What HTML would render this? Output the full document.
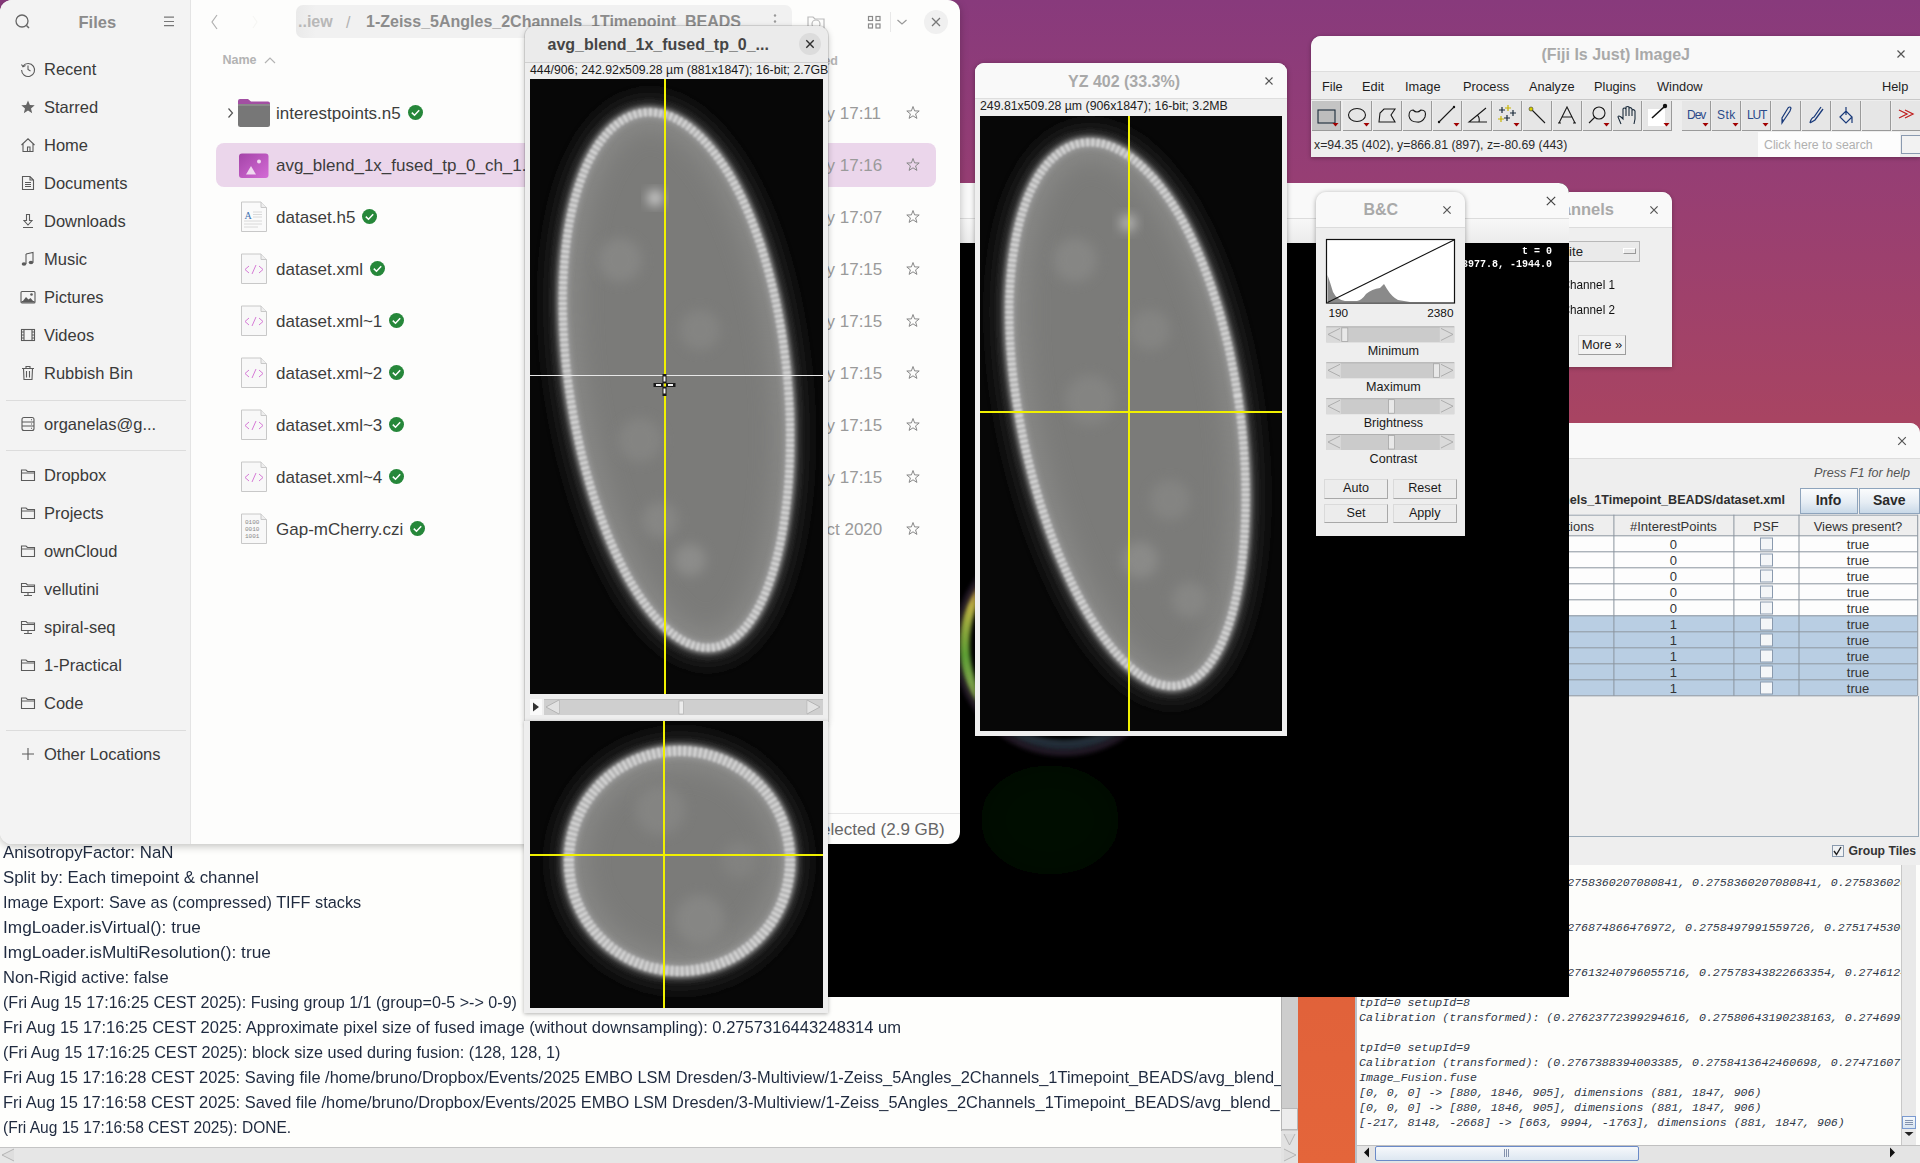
<!DOCTYPE html>
<html><head><meta charset="utf-8">
<style>
*{box-sizing:border-box;margin:0;padding:0}
html,body{width:1920px;height:1163px;overflow:hidden;font-family:"Liberation Sans",sans-serif}
body{position:relative;background:linear-gradient(180deg,#883a7c 0%,#963e74 15%,#a84462 36%,#c24e4a 60%,#e0613a 82%,#e4653a 100%)}
.a{position:absolute}
.t{position:absolute;white-space:nowrap;line-height:1}
svg{position:absolute;overflow:visible}
</style></head><body>

<div class="a" style="left:0;top:800px;width:960px;height:50px;background:#fefefc"></div>
<div class="a" id="log" style="left:0;top:844px;width:1298px;height:319px;background:#fefefc;overflow:hidden">
<div class="a" style="left:0;top:0;width:1281px;height:303px;overflow:hidden">
<div class="t" style="left:2.5px;top:-0.2px;font-size:16.25px;color:#1f2a3f;transform:scaleX(1.037);transform-origin:0 0">AnisotropyFactor: NaN</div>
<div class="t" style="left:2.5px;top:24.8px;font-size:16.25px;color:#1f2a3f;transform:scaleX(1.037);transform-origin:0 0">Split by: Each timepoint &amp; channel</div>
<div class="t" style="left:2.5px;top:49.8px;font-size:16.25px;color:#1f2a3f;transform:scaleX(1.0025);transform-origin:0 0">Image Export: Save as (compressed) TIFF stacks</div>
<div class="t" style="left:2.5px;top:74.8px;font-size:16.25px;color:#1f2a3f;transform:scaleX(1.06);transform-origin:0 0">ImgLoader.isVirtual(): true</div>
<div class="t" style="left:2.5px;top:99.8px;font-size:16.25px;color:#1f2a3f;transform:scaleX(1.063);transform-origin:0 0">ImgLoader.isMultiResolution(): true</div>
<div class="t" style="left:2.5px;top:124.8px;font-size:16.25px;color:#1f2a3f;transform:scaleX(1.02);transform-origin:0 0">Non-Rigid active: false</div>
<div class="t" style="left:2.5px;top:149.8px;font-size:16.25px;color:#1f2a3f;transform:scaleX(0.991);transform-origin:0 0">(Fri Aug 15 17:16:25 CEST 2025): Fusing group 1/1 (group=0-5 &gt;-&gt; 0-9)</div>
<div class="t" style="left:2.5px;top:174.8px;font-size:16.25px;color:#1f2a3f;transform:scaleX(1.019);transform-origin:0 0">Fri Aug 15 17:16:25 CEST 2025: Approximate pixel size of fused image (without downsampling): 0.2757316443248314 um</div>
<div class="t" style="left:2.5px;top:199.8px;font-size:16.25px;color:#1f2a3f;transform:scaleX(0.996);transform-origin:0 0">(Fri Aug 15 17:16:25 CEST 2025): block size used during fusion: (128, 128, 1)</div>
<div class="t" style="left:2.5px;top:224.8px;font-size:16.25px;color:#1f2a3f;transform:scaleX(1.011);transform-origin:0 0">Fri Aug 15 17:16:28 CEST 2025: Saving file /home/bruno/Dropbox/Events/2025 EMBO LSM Dresden/3-Multiview/1-Zeiss_5Angles_2Channels_1Timepoint_BEADS/avg_blend_1x_fused_tp_0_ch_1.tif</div>
<div class="t" style="left:2.5px;top:249.8px;font-size:16.25px;color:#1f2a3f;transform:scaleX(1.011);transform-origin:0 0">Fri Aug 15 17:16:58 CEST 2025: Saved file /home/bruno/Dropbox/Events/2025 EMBO LSM Dresden/3-Multiview/1-Zeiss_5Angles_2Channels_1Timepoint_BEADS/avg_blend_1x_fused_tp_0_ch_1.tif</div>
<div class="t" style="left:2.5px;top:274.8px;font-size:16.25px;color:#1f2a3f;transform:scaleX(0.956);transform-origin:0 0">(Fri Aug 15 17:16:58 CEST 2025): DONE.</div>
</div>
<div class="a" style="left:1281px;top:0;width:17px;height:303px;background:#cdcdcd;border-left:1px solid #b0b0b0"></div>
<div class="a" style="left:1281px;top:264px;width:17px;height:22px;background:#ececec;border:1px solid #b8b8b8"></div>
<div class="a" style="left:1281px;top:287px;width:17px;height:16px;background:#e2e2e2"></div>
<svg style="left:0;top:0" width="1298" height="319"><path d="M1284 290 L1289.5 301 L1295 290" fill="#dcdcdc" stroke="#a8a8a8" stroke-width="0.8"/><path d="M1284 306 L1295 311 L1284 316" fill="#dcdcdc" stroke="#a8a8a8" stroke-width="0.8"/></svg>
<div class="a" style="left:0;top:303px;width:1281px;height:16px;background:#e6e6e6;border-top:1px solid #c4c4c4"></div>
<svg style="left:0;top:0" width="1298" height="319"><path d="M14 305 L2 311 L14 317" fill="#dedede" stroke="#a8a8a8" stroke-width="0.8"/></svg>
<div class="a" style="left:1281px;top:303px;width:17px;height:16px;background:#e2e2e2"></div>
<svg style="left:0;top:0" width="1298" height="319"><path d="M1284 305 L1296 311 L1284 317" fill="#dcdcdc" stroke="#a8a8a8" stroke-width="0.8"/></svg>
</div>
<div class="a" style="left:1355px;top:863px;width:565px;height:300px;background:#fdfdfb;border-left:2px solid #b8c0c8;border-top:1px solid #9aaab8;overflow:hidden">
<div class="a" style="left:0;top:0;width:544px;height:281px;overflow:hidden">
<div class="t" style="left:2px;top:12.6px;font-family:'Liberation Mono';font-style:italic;font-size:11.57px;color:#2e3646">Calibration (transformed): (0.2758360207080841, 0.2758360207080841, 0.2758360207080841)</div>
<div class="t" style="left:2px;top:57.6px;font-family:'Liberation Mono';font-style:italic;font-size:11.57px;color:#2e3646">Calibration (transformed): (0.276874866476972, 0.2758497991559726, 0.2751745306)</div>
<div class="t" style="left:2px;top:102.6px;font-family:'Liberation Mono';font-style:italic;font-size:11.57px;color:#2e3646">Calibration (transformed): (0.27613240796055716, 0.27578343822663354, 0.27461240)</div>
<div class="t" style="left:2px;top:132.6px;font-family:'Liberation Mono';font-style:italic;font-size:11.57px;color:#2e3646">tpId=0 setupId=8</div>
<div class="t" style="left:2px;top:147.6px;font-family:'Liberation Mono';font-style:italic;font-size:11.57px;color:#2e3646">Calibration (transformed): (0.27623772399294616, 0.27580643190238163, 0.2746990)</div>
<div class="t" style="left:2px;top:177.8px;font-family:'Liberation Mono';font-style:italic;font-size:11.57px;color:#2e3646">tpId=0 setupId=9</div>
<div class="t" style="left:2px;top:192.6px;font-family:'Liberation Mono';font-style:italic;font-size:11.57px;color:#2e3646">Calibration (transformed): (0.2767388394003385, 0.2758413642460698, 0.27471607)</div>
<div class="t" style="left:2px;top:207.6px;font-family:'Liberation Mono';font-style:italic;font-size:11.57px;color:#2e3646">Image_Fusion.fuse</div>
<div class="t" style="left:2px;top:222.7px;font-family:'Liberation Mono';font-style:italic;font-size:11.57px;color:#2e3646">[0, 0, 0] -&gt; [880, 1846, 905], dimensions (881, 1847, 906)</div>
<div class="t" style="left:2px;top:237.7px;font-family:'Liberation Mono';font-style:italic;font-size:11.57px;color:#2e3646">[0, 0, 0] -&gt; [880, 1846, 905], dimensions (881, 1847, 906)</div>
<div class="t" style="left:2px;top:252.9px;font-family:'Liberation Mono';font-style:italic;font-size:11.57px;color:#2e3646">[-217, 8148, -2668] -&gt; [663, 9994, -1763], dimensions (881, 1847, 906)</div>
</div>
<div class="a" style="left:544px;top:0;width:15px;height:281px;background:#e9e9e9;border-left:1px solid #c8c8c8"></div>
<div class="a" style="left:545px;top:252px;width:14px;height:13px;background:linear-gradient(180deg,#f4f8fc,#d8e4f0);border:1px solid #7a9ad0"></div>
<svg style="left:0;top:0" width="565" height="300"><path d="M548 256.5 H556 M548 258.5 H556 M548 260.5 H556" stroke="#6a7a9a" stroke-width="0.8"/><path d="M547.5 268 L552 272 L556.5 268 Z" fill="#222"/><path d="M533 283.5 L537 288 L533 292.5 Z" fill="#111"/><path d="M12 283.5 L8 288 L12 292.5 Z" fill="#111"/></svg>
<div class="a" style="left:0;top:281px;width:563px;height:19px;background:#e4e4e4;border-top:1px solid #c0c0c0"></div>
<div class="a" style="left:18px;top:282px;width:264px;height:15px;background:linear-gradient(180deg,#f6f8fb,#dde7f1);border:1px solid #6a8ac8;border-radius:2px"></div>
<svg style="left:0;top:0" width="565" height="300"><path d="M12 283.5 L7 288.5 L12 293.5 Z" fill="#111"/><path d="M533 283.5 L538 288.5 L533 293.5 Z" fill="#111"/><path d="M147.5 285 V293 M149.5 285 V293 M151.5 285 V293" stroke="#6a7a9a" stroke-width="0.8"/></svg>
</div>
<div class="a" style="left:1540px;top:192px;width:132px;height:175px;background:#efefef;border-radius:0 10px 0 0;overflow:hidden;box-shadow:0 1px 4px rgba(0,0,0,0.3)">
<div class="a" style="left:0;top:0;width:132px;height:36px;background:#f9f9f9;border-bottom:1px solid #dcdcdc"></div>
</div>
<div class="t" style="left:1314px;width:300px;text-align:right;top:201.0px;font-size:16.5px;color:#a9a9a9;font-weight:bold;">Channels</div>
<svg style="left:0;top:0" width="1920" height="1163"><path d="M1650.4 206.4 L1657.6 213.6 M1657.6 206.4 L1650.4 213.6" stroke="#555" stroke-width="1.2"/></svg>
<div class="a" style="left:1540px;top:241px;width:100px;height:21px;background:#eaeaea;border:1px solid #b8b8b8;border-left:none"></div>
<div class="t" style="left:1283px;width:300px;text-align:right;top:244.8px;font-size:13.2px;color:#222;font-weight:normal;">Composite</div>
<div class="a" style="left:1623px;top:248px;width:13px;height:6px;border:1px solid #999;border-top-color:#fff;border-left-color:#fff"></div>
<div class="t" style="left:1314.5px;width:300px;text-align:right;top:277.7px;font-size:13px;color:#111;font-weight:normal;transform:scaleX(0.9);transform-origin:100% 0">Channel 1</div>
<div class="t" style="left:1314.5px;width:300px;text-align:right;top:302.8px;font-size:13px;color:#111;font-weight:normal;transform:scaleX(0.9);transform-origin:100% 0">Channel 2</div>
<div class="a" style="left:1578px;top:335px;width:48px;height:20px;background:#f2f2f2;border:1px solid #9c9c9c;border-top-color:#d8d8d8;border-left-color:#d8d8d8"></div>
<div class="t" style="left:1572.0px;width:60px;text-align:center;top:338.0px;font-size:13px;color:#222;font-weight:normal">More »</div>
<div class="a" style="left:1500px;top:423px;width:420px;height:442px;background:#eeeeee;border-radius:0 10px 0 0;overflow:hidden">
<div class="a" style="left:0;top:0;width:420px;height:36px;background:#f9f9f9;border-bottom:1px solid #dcdcdc"></div>
</div>
<svg style="left:0;top:0" width="1920" height="1163"><path d="M1898.2 437.2 L1905.8 444.8 M1905.8 437.2 L1898.2 444.8" stroke="#555" stroke-width="1.2"/></svg>
<div class="t" style="left:1610px;width:300px;text-align:right;top:467.3px;font-size:12.6px;color:#555;font-weight:normal;font-style:italic">Press F1 for help</div>
<div class="t" style="left:885px;width:900px;text-align:right;top:493.8px;font-size:12.6px;color:#2e2e2e;font-weight:bold;">/home/bruno/Dropbox/Events/2025 EMBO LSM Dresden/3-Multiview/1-Zeiss_5Angles_2Channels_1Timepoint_BEADS/dataset.xml</div>
<div class="a" style="left:1799.5px;top:487.5px;width:58px;height:26px;background:linear-gradient(180deg,#fbfcfd 0%,#e6edf4 55%,#c9d9e8 100%);border:1px solid #8ea4bc"></div>
<div class="t" style="left:1799.5px;width:58px;text-align:center;top:493.2px;font-size:14px;color:#2a2a2a;font-weight:bold">Info</div>
<div class="a" style="left:1858.5px;top:487.5px;width:61.5px;height:26px;background:linear-gradient(180deg,#fbfcfd 0%,#e6edf4 55%,#c9d9e8 100%);border:1px solid #8ea4bc"></div>
<div class="t" style="left:1858.5px;width:61.5px;text-align:center;top:493.2px;font-size:14px;color:#2a2a2a;font-weight:bold">Save</div>
<svg style="left:0;top:0" width="1920" height="1163"><rect x="1500" y="514.7" width="417.5" height="20.6" fill="#eeeeee"/><rect x="1500" y="535.5" width="417.5" height="16" fill="#fdfdfd"/><rect x="1500" y="551.5" width="417.5" height="16" fill="#fdfdfd"/><rect x="1500" y="567.5" width="417.5" height="16" fill="#fdfdfd"/><rect x="1500" y="583.5" width="417.5" height="16" fill="#fdfdfd"/><rect x="1500" y="599.5" width="417.5" height="16" fill="#fdfdfd"/><rect x="1500" y="615.5" width="417.5" height="16" fill="#b9cee3"/><rect x="1500" y="631.5" width="417.5" height="16" fill="#b9cee3"/><rect x="1500" y="647.5" width="417.5" height="16" fill="#b9cee3"/><rect x="1500" y="663.5" width="417.5" height="16" fill="#b9cee3"/><rect x="1500" y="679.5" width="417.5" height="16" fill="#b9cee3"/><rect x="1500" y="535.3" width="417.5" height="1" fill="#8a949e"/><rect x="1500" y="551.3" width="417.5" height="1" fill="#8a949e"/><rect x="1500" y="567.3" width="417.5" height="1" fill="#8a949e"/><rect x="1500" y="583.3" width="417.5" height="1" fill="#8a949e"/><rect x="1500" y="599.3" width="417.5" height="1" fill="#8a949e"/><rect x="1500" y="615.3" width="417.5" height="1" fill="#8a949e"/><rect x="1500" y="631.3" width="417.5" height="1" fill="#8a949e"/><rect x="1500" y="647.3" width="417.5" height="1" fill="#8a949e"/><rect x="1500" y="663.3" width="417.5" height="1" fill="#8a949e"/><rect x="1500" y="679.3" width="417.5" height="1" fill="#8a949e"/><rect x="1500" y="695.3" width="417.5" height="1" fill="#8a949e"/><rect x="1500" y="514.7" width="417.5" height="1" fill="#9aa4ae"/><rect x="1613.4" y="514.7" width="1" height="181" fill="#8a949e"/><rect x="1733.4" y="514.7" width="1" height="181" fill="#8a949e"/><rect x="1798.5" y="514.7" width="1" height="181" fill="#8a949e"/><rect x="1917.2" y="514.7" width="1" height="181" fill="#8a949e"/><rect x="1760.5" y="538.0" width="12" height="12" fill="#f4f6f8" stroke="#8a9aae" stroke-width="1"/><rect x="1760.5" y="554.0" width="12" height="12" fill="#f4f6f8" stroke="#8a9aae" stroke-width="1"/><rect x="1760.5" y="570.0" width="12" height="12" fill="#f4f6f8" stroke="#8a9aae" stroke-width="1"/><rect x="1760.5" y="586.0" width="12" height="12" fill="#f4f6f8" stroke="#8a9aae" stroke-width="1"/><rect x="1760.5" y="602.0" width="12" height="12" fill="#f4f6f8" stroke="#8a9aae" stroke-width="1"/><rect x="1760.5" y="618.0" width="12" height="12" fill="#f4f6f8" stroke="#8a9aae" stroke-width="1"/><rect x="1760.5" y="634.0" width="12" height="12" fill="#f4f6f8" stroke="#8a9aae" stroke-width="1"/><rect x="1760.5" y="650.0" width="12" height="12" fill="#f4f6f8" stroke="#8a9aae" stroke-width="1"/><rect x="1760.5" y="666.0" width="12" height="12" fill="#f4f6f8" stroke="#8a9aae" stroke-width="1"/><rect x="1760.5" y="682.0" width="12" height="12" fill="#f4f6f8" stroke="#8a9aae" stroke-width="1"/></svg>
<div class="t" style="left:1466.0px;width:180px;text-align:center;top:519.5px;font-size:13px;color:#333;font-weight:normal">Registrations</div>
<div class="t" style="left:1613.4px;width:120px;text-align:center;top:519.5px;font-size:13px;color:#333;font-weight:normal">#InterestPoints</div>
<div class="t" style="left:1736.0px;width:60px;text-align:center;top:519.5px;font-size:13px;color:#333;font-weight:normal">PSF</div>
<div class="t" style="left:1799.0px;width:118px;text-align:center;top:519.5px;font-size:13px;color:#333;font-weight:normal">Views present?</div>
<div class="t" style="left:1653.4px;width:40px;text-align:center;top:537.6px;font-size:13px;color:#333;font-weight:normal">0</div>
<div class="t" style="left:1828.0px;width:60px;text-align:center;top:537.6px;font-size:13px;color:#333;font-weight:normal">true</div>
<div class="t" style="left:1653.4px;width:40px;text-align:center;top:553.6px;font-size:13px;color:#333;font-weight:normal">0</div>
<div class="t" style="left:1828.0px;width:60px;text-align:center;top:553.6px;font-size:13px;color:#333;font-weight:normal">true</div>
<div class="t" style="left:1653.4px;width:40px;text-align:center;top:569.6px;font-size:13px;color:#333;font-weight:normal">0</div>
<div class="t" style="left:1828.0px;width:60px;text-align:center;top:569.6px;font-size:13px;color:#333;font-weight:normal">true</div>
<div class="t" style="left:1653.4px;width:40px;text-align:center;top:585.6px;font-size:13px;color:#333;font-weight:normal">0</div>
<div class="t" style="left:1828.0px;width:60px;text-align:center;top:585.6px;font-size:13px;color:#333;font-weight:normal">true</div>
<div class="t" style="left:1653.4px;width:40px;text-align:center;top:601.6px;font-size:13px;color:#333;font-weight:normal">0</div>
<div class="t" style="left:1828.0px;width:60px;text-align:center;top:601.6px;font-size:13px;color:#333;font-weight:normal">true</div>
<div class="t" style="left:1653.4px;width:40px;text-align:center;top:617.6px;font-size:13px;color:#333;font-weight:normal">1</div>
<div class="t" style="left:1828.0px;width:60px;text-align:center;top:617.6px;font-size:13px;color:#333;font-weight:normal">true</div>
<div class="t" style="left:1653.4px;width:40px;text-align:center;top:633.6px;font-size:13px;color:#333;font-weight:normal">1</div>
<div class="t" style="left:1828.0px;width:60px;text-align:center;top:633.6px;font-size:13px;color:#333;font-weight:normal">true</div>
<div class="t" style="left:1653.4px;width:40px;text-align:center;top:649.6px;font-size:13px;color:#333;font-weight:normal">1</div>
<div class="t" style="left:1828.0px;width:60px;text-align:center;top:649.6px;font-size:13px;color:#333;font-weight:normal">true</div>
<div class="t" style="left:1653.4px;width:40px;text-align:center;top:665.6px;font-size:13px;color:#333;font-weight:normal">1</div>
<div class="t" style="left:1828.0px;width:60px;text-align:center;top:665.6px;font-size:13px;color:#333;font-weight:normal">true</div>
<div class="t" style="left:1653.4px;width:40px;text-align:center;top:681.6px;font-size:13px;color:#333;font-weight:normal">1</div>
<div class="t" style="left:1828.0px;width:60px;text-align:center;top:681.6px;font-size:13px;color:#333;font-weight:normal">true</div>
<div class="a" style="left:1500px;top:835.5px;width:419px;height:1px;background:#9aaab8"></div>
<div class="a" style="left:1918px;top:696px;width:1px;height:140px;background:#9aaab8"></div>
<div class="a" style="left:1831.5px;top:845px;width:12px;height:12px;background:#f0f2f4;border:1px solid #8a9aae"></div>
<svg style="left:0;top:0" width="1920" height="1163"><path d="M1834 851 L1836.5 854.5 L1841 847" fill="none" stroke="#222" stroke-width="1.4"/></svg>
<div class="t" style="left:1848.5px;top:844.7px;font-size:12.2px;color:#333;font-weight:bold;">Group Tiles</div>
<div class="a" style="left:828px;top:183px;width:741px;height:814px;background:#000;border-radius:0 10px 0 0;overflow:hidden">
<div class="a" style="left:0;top:0;width:741px;height:36px;background:#f9f9f9;border-bottom:1px solid #dcdcdc"></div>
<div class="a" style="left:0;top:36px;width:741px;height:24px;background:linear-gradient(180deg,#f7f7f7,#ebebeb)"></div>
</div>
<svg style="left:0;top:0" width="1920" height="1163"><path d="M1546.8 196.8 L1555.2 205.2 M1555.2 196.8 L1546.8 205.2" stroke="#444" stroke-width="1.2"/></svg>
<div class="t" style="left:1252px;width:300px;text-align:right;top:246.5px;font-size:10px;color:#fff;font-weight:bold;font-family:'Liberation Mono';transform:scaleY(1.15)">t = 0</div>
<div class="t" style="left:1252px;width:300px;text-align:right;top:259.5px;font-size:10px;color:#fff;font-weight:bold;font-family:'Liberation Mono';transform:scaleY(1.15)">3977.8, -1944.0</div>
<svg style="left:0;top:0" width="1920" height="1163"><defs><linearGradient id="fl" x1="0" y1="0" x2="0" y2="1"><stop offset="0" stop-color="#d04070"/><stop offset="0.3" stop-color="#e0d050"/><stop offset="0.55" stop-color="#70c040"/><stop offset="0.75" stop-color="#a0c060"/><stop offset="0.92" stop-color="#8098a8" stop-opacity="0.5"/><stop offset="1" stop-color="#6080a0" stop-opacity="0.4"/></linearGradient><filter id="flb" x="-20%" y="-20%" width="140%" height="140%"><feGaussianBlur stdDeviation="2"/></filter><filter id="flb2" x="-50%" y="-50%" width="200%" height="200%"><feGaussianBlur stdDeviation="18"/></filter></defs><ellipse cx="1050" cy="820" rx="70" ry="55" fill="#040904" filter="url(#flb2)"/><circle cx="1064" cy="645" r="100" fill="none" stroke="url(#fl)" stroke-width="11" opacity="0.85" filter="url(#flb)"/><circle cx="1064" cy="645" r="108" fill="none" stroke="#3a2a40" stroke-width="6" opacity="0.6" filter="url(#flb)"/></svg>
<div class="a" id="files" style="left:0;top:0;width:960px;height:844px;background:#fdfdfc;border-radius:12px 12px 12px 12px;overflow:hidden;box-shadow:0 2px 8px rgba(0,0,0,0.25)">
<div class="a" style="left:0;top:0;width:191px;height:844px;background:#f3f3f3;border-right:1px solid #e4e4e4"></div>
<svg style="left:0;top:0" width="191" height="40"><circle cx="22" cy="21" r="6" fill="none" stroke="#666" stroke-width="1.3"/><line x1="26.5" y1="25.5" x2="29" y2="28" stroke="#666" stroke-width="1.5"/><g stroke="#777" stroke-width="1.2"><line x1="164" y1="17.2" x2="174" y2="17.2"/><line x1="164" y1="21.5" x2="174" y2="21.5"/><line x1="164" y1="25.7" x2="174" y2="25.7"/></g></svg>
<div class="t" style="left:78.5px;top:14.0px;font-size:16.5px;color:#8b8b8b;font-weight:bold;">Files</div>
<svg style="left:20px;top:61px" width="16" height="16"><path d="M3 5 A6.5 6.5 0 1 1 1.6 9" stroke="#5a5a5a" stroke-width="1.1" fill="none"/><path d="M1.5 3.5 L3 5.8 L5.5 4.6" stroke="#5a5a5a" stroke-width="1.1" fill="none"/><path d="M8 4.5 V8.5 L10.5 10" stroke="#5a5a5a" stroke-width="1.1" fill="none"/></svg>
<div class="t" style="left:44px;top:61.0px;font-size:16.5px;color:#3a3a3a;font-weight:normal;">Recent</div>
<svg style="left:20px;top:99px" width="16" height="16"><path d="M8 1.5 L9.9 6 L14.7 6.3 L11 9.4 L12.2 14.2 L8 11.6 L3.8 14.2 L5 9.4 L1.3 6.3 L6.1 6 Z" fill="#666"/></svg>
<div class="t" style="left:44px;top:99.0px;font-size:16.5px;color:#3a3a3a;font-weight:normal;">Starred</div>
<svg style="left:20px;top:137px" width="16" height="16"><path d="M1.5 8 L8 1.8 L14.5 8 M3 6.8 V14.5 H13 V6.8 M7.5 14.5 V10 H10 V14.5" stroke="#5a5a5a" stroke-width="1.1" fill="none"/></svg>
<div class="t" style="left:44px;top:137.0px;font-size:16.5px;color:#3a3a3a;font-weight:normal;">Home</div>
<svg style="left:20px;top:175px" width="16" height="16"><path d="M2.5 1.5 H10 L13.5 5 V14.5 H2.5 Z M10 1.5 V5 H13.5" stroke="#5a5a5a" stroke-width="1.1" fill="none"/><path d="M5 7.5 H11 M5 9.5 H11 M5 11.5 H11" stroke="#5a5a5a" stroke-width="1.1" fill="none"/></svg>
<div class="t" style="left:44px;top:175.0px;font-size:16.5px;color:#3a3a3a;font-weight:normal;">Documents</div>
<svg style="left:20px;top:213px" width="16" height="16"><path d="M6.5 1.5 H9.5 V7.5 H12 L8 12 L4 7.5 H6.5 Z M3 14.5 H13" stroke="#5a5a5a" stroke-width="1.1" fill="none"/></svg>
<div class="t" style="left:44px;top:213.0px;font-size:16.5px;color:#3a3a3a;font-weight:normal;">Downloads</div>
<svg style="left:20px;top:251px" width="16" height="16"><path d="M6 3 L13 1.5 V11.5" stroke="#5a5a5a" stroke-width="1.1" fill="none" stroke-width="1.4"/><path d="M6 3 V13" stroke="#5a5a5a" stroke-width="1.1" fill="none" stroke-width="1.4"/><ellipse cx="4" cy="13" rx="2.3" ry="1.8" fill="#5a5a5a"/><ellipse cx="11" cy="11.5" rx="2.3" ry="1.8" fill="#5a5a5a"/></svg>
<div class="t" style="left:44px;top:251.0px;font-size:16.5px;color:#3a3a3a;font-weight:normal;">Music</div>
<svg style="left:20px;top:289px" width="16" height="16"><rect x="1" y="2.5" width="14" height="11.5" rx="1" stroke="#5a5a5a" stroke-width="1.1" fill="none"/><path d="M2.5 12.5 L6 8 L8.5 10.5 L10.5 9 L13.5 12.5 Z" fill="#5a5a5a"/><circle cx="11.5" cy="5.5" r="1.3" fill="#5a5a5a"/><path d="M1.5 12.8 H14.5" stroke="#5a5a5a" stroke-width="1.6"/></svg>
<div class="t" style="left:44px;top:289.0px;font-size:16.5px;color:#3a3a3a;font-weight:normal;">Pictures</div>
<svg style="left:20px;top:327px" width="16" height="16"><rect x="1.5" y="2.5" width="13" height="11" stroke="#5a5a5a" stroke-width="1.1" fill="none"/><path d="M4 2.5 V13.5 M12 2.5 V13.5 M1.5 5 H4 M1.5 8 H4 M1.5 11 H4 M12 5 H14.5 M12 8 H14.5 M12 11 H14.5" stroke="#5a5a5a" stroke-width="1.1" fill="none"/></svg>
<div class="t" style="left:44px;top:327.0px;font-size:16.5px;color:#3a3a3a;font-weight:normal;">Videos</div>
<svg style="left:20px;top:365px" width="16" height="16"><path d="M2 3.5 H14 M6 3.5 V1.5 H10 V3.5 M3.5 3.5 L4 14.5 H12 L12.5 3.5 M6.5 6 V12.5 M9.5 6 V12.5" stroke="#5a5a5a" stroke-width="1.1" fill="none"/></svg>
<div class="t" style="left:44px;top:365.0px;font-size:16.5px;color:#3a3a3a;font-weight:normal;">Rubbish Bin</div>
<svg style="left:20px;top:416px" width="16" height="16"><rect x="2" y="1.5" width="12" height="13" rx="2" stroke="#5a5a5a" stroke-width="1.1" fill="none"/><path d="M2 6 H14 M2 10 H14" stroke="#5a5a5a" stroke-width="1.1" fill="none"/><path d="M11 3.8 H12 M11 8 H12 M11 12.2 H12" stroke="#5a5a5a" stroke-width="1.1" fill="none"/></svg>
<div class="t" style="left:44px;top:416.0px;font-size:16.5px;color:#3a3a3a;font-weight:normal;">organelas@g...</div>
<svg style="left:20px;top:467px" width="16" height="16"><path d="M1.5 3 H6 L7.5 4.5 H14.5 V13.5 H1.5 Z M1.5 6 H14.5" stroke="#5a5a5a" stroke-width="1.1" fill="none"/></svg>
<div class="t" style="left:44px;top:467.0px;font-size:16.5px;color:#3a3a3a;font-weight:normal;">Dropbox</div>
<svg style="left:20px;top:505px" width="16" height="16"><path d="M1.5 3 H6 L7.5 4.5 H14.5 V13.5 H1.5 Z M1.5 6 H14.5" stroke="#5a5a5a" stroke-width="1.1" fill="none"/></svg>
<div class="t" style="left:44px;top:505.0px;font-size:16.5px;color:#3a3a3a;font-weight:normal;">Projects</div>
<svg style="left:20px;top:543px" width="16" height="16"><path d="M1.5 3 H6 L7.5 4.5 H14.5 V13.5 H1.5 Z M1.5 6 H14.5" stroke="#5a5a5a" stroke-width="1.1" fill="none"/></svg>
<div class="t" style="left:44px;top:543.0px;font-size:16.5px;color:#3a3a3a;font-weight:normal;">ownCloud</div>
<svg style="left:20px;top:581px" width="16" height="16"><path d="M1.5 2.5 H6 L7.5 4 H14.5 V11.5 H1.5 Z M1.5 5.5 H14.5 M8 11.5 V14 M4 14.5 H12" stroke="#5a5a5a" stroke-width="1.1" fill="none"/></svg>
<div class="t" style="left:44px;top:581.0px;font-size:16.5px;color:#3a3a3a;font-weight:normal;">vellutini</div>
<svg style="left:20px;top:619px" width="16" height="16"><path d="M1.5 2.5 H6 L7.5 4 H14.5 V11.5 H1.5 Z M1.5 5.5 H14.5 M8 11.5 V14 M4 14.5 H12" stroke="#5a5a5a" stroke-width="1.1" fill="none"/></svg>
<div class="t" style="left:44px;top:619.0px;font-size:16.5px;color:#3a3a3a;font-weight:normal;">spiral-seq</div>
<svg style="left:20px;top:657px" width="16" height="16"><path d="M1.5 3 H6 L7.5 4.5 H14.5 V13.5 H1.5 Z M1.5 6 H14.5" stroke="#5a5a5a" stroke-width="1.1" fill="none"/></svg>
<div class="t" style="left:44px;top:657.0px;font-size:16.5px;color:#3a3a3a;font-weight:normal;">1-Practical</div>
<svg style="left:20px;top:695px" width="16" height="16"><path d="M1.5 3 H6 L7.5 4.5 H14.5 V13.5 H1.5 Z M1.5 6 H14.5" stroke="#5a5a5a" stroke-width="1.1" fill="none"/></svg>
<div class="t" style="left:44px;top:695.0px;font-size:16.5px;color:#3a3a3a;font-weight:normal;">Code</div>
<svg style="left:20px;top:746px" width="16" height="16"><path d="M8 2 V14 M2 8 H14" stroke="#5a5a5a" stroke-width="1.1" fill="none"/></svg>
<div class="t" style="left:44px;top:746.0px;font-size:16.5px;color:#3a3a3a;font-weight:normal;">Other Locations</div>
<div class="a" style="left:6px;top:399.5px;width:180px;height:1px;background:#dcdcdc"></div>
<div class="a" style="left:6px;top:449.5px;width:180px;height:1px;background:#dcdcdc"></div>
<div class="a" style="left:6px;top:729.5px;width:180px;height:1px;background:#dcdcdc"></div>
<svg style="left:0;top:0" width="960" height="60"><path d="M217 15 L212 22 L217 29" fill="none" stroke="#b0b0b0" stroke-width="1.2"/><path d="M253 16 L257 22 L253 28" fill="none" stroke="#f6f6f4" stroke-width="1.2"/></svg>
<div class="a" style="left:296px;top:5px;width:496px;height:33px;border-radius:7px;background:linear-gradient(90deg,#eaeaea 0px,#f1f1f1 20px,#f1f1f1 100%)"></div>
<div class="t" style="left:298px;top:14.0px;font-size:16px;color:#b8b8b8;font-weight:bold;">..iew</div>
<div class="t" style="left:346px;top:14.5px;font-size:16px;color:#b0b0b0;font-weight:normal;">/</div>
<div class="t" style="left:366px;top:14.0px;font-size:16px;color:#8c8c8c;font-weight:bold;letter-spacing:0px">1-Zeiss_5Angles_2Channels_1Timepoint_BEADS</div>
<svg style="left:0;top:0" width="960" height="60"><g fill="#999"><circle cx="775" cy="15.5" r="1.2"/><circle cx="775" cy="21.5" r="1.2"/><circle cx="775" cy="27.5" r="1.2"/></g><path d="M808 30 V17 H813 L815 19 H824 V30" fill="none" stroke="#bbb" stroke-width="1.2"/><circle cx="816" cy="24" r="4" fill="none" stroke="#bbb" stroke-width="1.2"/><g fill="none" stroke="#8a8a8a" stroke-width="1.2"><rect x="868.5" y="16.5" width="4" height="4"/><rect x="876" y="16.5" width="4" height="4"/><rect x="868.5" y="24" width="4" height="4"/><rect x="876" y="24" width="4" height="4"/></g><line x1="890.5" y1="12" x2="890.5" y2="32" stroke="#e8e8e8"/><path d="M897.5 20 L902 24 L906.5 20" fill="none" stroke="#999" stroke-width="1.2"/><circle cx="936" cy="22" r="12" fill="#f0f0f0"/><path d="M932 18 L940 26 M940 18 L932 26" stroke="#777" stroke-width="1.3"/></svg>
<div class="t" style="left:222.5px;top:54.4px;font-size:12.5px;color:#b3b3b3;font-weight:bold;">Name</div>
<div class="t" style="left:638px;width:200px;text-align:right;top:55.4px;font-size:12.5px;color:#b3b3b3;font-weight:bold">Modified</div>
<svg style="left:0;top:0" width="300" height="80"><path d="M265 63 L270 58 L275 63" fill="none" stroke="#b3b3b3" stroke-width="1.2"/></svg>
<div class="a" style="left:216px;top:143px;width:720px;height:44px;border-radius:8px;background:#ebd6eb"></div>
<svg style="left:0;top:0" width="300" height="140"><path d="M228.5 108.5 L232.5 113 L228.5 117.5" fill="none" stroke="#555" stroke-width="1.2"/><path d="M238 101 Q238 99 240 99 H248 L251 101.5 H268 Q270 101.5 270 103.5 V108 H238 Z" fill="#a24fa2"/><rect x="238" y="104" width="32" height="23" rx="2.5" fill="#777"/><rect x="238" y="104" width="32" height="2" fill="#8a8a8a"/></svg>
<div class="t" style="left:276px;top:104.6px;font-size:17px;color:#3d3d3d;font-weight:normal;">interestpoints.n5</div>
<div class="t" style="left:826.5px;top:104.6px;font-size:17px;color:#9a9a9a;font-weight:normal;">y 17:11</div>
<svg style="left:0;top:0" width="960" height="560"><path transform="translate(913 113)" d="M0 -6.5 L1.6 -2.1 L6.2 -2 L2.6 0.9 L3.9 5.4 L0 2.8 L-3.9 5.4 L-2.6 0.9 L-6.2 -2 L-1.6 -2.1 Z" fill="none" stroke="#888" stroke-width="1"/></svg>
<svg style="left:0;top:0" width="300" height="200"><defs><linearGradient id="gi" x1="0" y1="0" x2="1" y2="1"><stop offset="0" stop-color="#a444a8"/><stop offset="1" stop-color="#d46cd6"/></linearGradient></defs><rect x="239" y="153.5" width="29.5" height="24.5" rx="3" fill="url(#gi)"/><path d="M246 174.5 L251 166 L256 174.5 Z" fill="#f0d8f0"/><circle cx="259" cy="161.5" r="2" fill="#f0d8f0"/></svg>
<div class="t" style="left:276px;top:156.6px;font-size:17px;color:#3d3d3d;font-weight:normal;">avg_blend_1x_fused_tp_0_ch_1.tif</div>
<div class="t" style="left:826.5px;top:156.6px;font-size:17px;color:#9a9a9a;font-weight:normal;">y 17:16</div>
<svg style="left:0;top:0" width="960" height="560"><path transform="translate(913 165)" d="M0 -6.5 L1.6 -2.1 L6.2 -2 L2.6 0.9 L3.9 5.4 L0 2.8 L-3.9 5.4 L-2.6 0.9 L-6.2 -2 L-1.6 -2.1 Z" fill="none" stroke="#888" stroke-width="1"/></svg>
<svg style="left:0;top:0" width="300" height="260"><path d="M241.5 202 H261 L266.5 207.5 V231.5 H241.5 Z" fill="#fafafa" stroke="#c8c8c8" stroke-width="1"/><path d="M261 202 V207.5 H266.5" fill="#eee" stroke="#c8c8c8"/><text x="244.5" y="218.5" font-family="Liberation Serif" font-size="10" fill="#3a70b0">A</text><path d="M253 212 H262 M253 214.5 H262 M253 217 H262 M244 221 H262 M244 224 H262 M244 227 H258" stroke="#d0d0d0" stroke-width="0.8"/></svg>
<div class="t" style="left:276px;top:208.6px;font-size:17px;color:#3d3d3d;font-weight:normal;">dataset.h5</div>
<div class="t" style="left:826.5px;top:208.6px;font-size:17px;color:#9a9a9a;font-weight:normal;">y 17:07</div>
<svg style="left:0;top:0" width="960" height="560"><path transform="translate(913 217)" d="M0 -6.5 L1.6 -2.1 L6.2 -2 L2.6 0.9 L3.9 5.4 L0 2.8 L-3.9 5.4 L-2.6 0.9 L-6.2 -2 L-1.6 -2.1 Z" fill="none" stroke="#888" stroke-width="1"/></svg>
<svg style="left:0;top:0" width="300" height="520"><path d="M241.5 254 H261 L266.5 259.5 V283.5 H241.5 Z" fill="#f8f8f8" stroke="#c8c8c8" stroke-width="1"/><path d="M261 254 V259.5 H266.5" fill="#eee" stroke="#c8c8c8"/><path d="M249 266 L245 269.5 L249 273 M252 274 L256 265 M259 266 L263 269.5 L259 273" fill="none" stroke="#d67ad6" stroke-width="1"/></svg>
<div class="t" style="left:276px;top:260.6px;font-size:17px;color:#3d3d3d;font-weight:normal;">dataset.xml</div>
<div class="t" style="left:826.5px;top:260.6px;font-size:17px;color:#9a9a9a;font-weight:normal;">y 17:15</div>
<svg style="left:0;top:0" width="960" height="560"><path transform="translate(913 269)" d="M0 -6.5 L1.6 -2.1 L6.2 -2 L2.6 0.9 L3.9 5.4 L0 2.8 L-3.9 5.4 L-2.6 0.9 L-6.2 -2 L-1.6 -2.1 Z" fill="none" stroke="#888" stroke-width="1"/></svg>
<svg style="left:0;top:0" width="300" height="520"><path d="M241.5 306 H261 L266.5 311.5 V335.5 H241.5 Z" fill="#f8f8f8" stroke="#c8c8c8" stroke-width="1"/><path d="M261 306 V311.5 H266.5" fill="#eee" stroke="#c8c8c8"/><path d="M249 318 L245 321.5 L249 325 M252 326 L256 317 M259 318 L263 321.5 L259 325" fill="none" stroke="#d67ad6" stroke-width="1"/></svg>
<div class="t" style="left:276px;top:312.6px;font-size:17px;color:#3d3d3d;font-weight:normal;">dataset.xml~1</div>
<div class="t" style="left:826.5px;top:312.6px;font-size:17px;color:#9a9a9a;font-weight:normal;">y 17:15</div>
<svg style="left:0;top:0" width="960" height="560"><path transform="translate(913 321)" d="M0 -6.5 L1.6 -2.1 L6.2 -2 L2.6 0.9 L3.9 5.4 L0 2.8 L-3.9 5.4 L-2.6 0.9 L-6.2 -2 L-1.6 -2.1 Z" fill="none" stroke="#888" stroke-width="1"/></svg>
<svg style="left:0;top:0" width="300" height="520"><path d="M241.5 358 H261 L266.5 363.5 V387.5 H241.5 Z" fill="#f8f8f8" stroke="#c8c8c8" stroke-width="1"/><path d="M261 358 V363.5 H266.5" fill="#eee" stroke="#c8c8c8"/><path d="M249 370 L245 373.5 L249 377 M252 378 L256 369 M259 370 L263 373.5 L259 377" fill="none" stroke="#d67ad6" stroke-width="1"/></svg>
<div class="t" style="left:276px;top:364.6px;font-size:17px;color:#3d3d3d;font-weight:normal;">dataset.xml~2</div>
<div class="t" style="left:826.5px;top:364.6px;font-size:17px;color:#9a9a9a;font-weight:normal;">y 17:15</div>
<svg style="left:0;top:0" width="960" height="560"><path transform="translate(913 373)" d="M0 -6.5 L1.6 -2.1 L6.2 -2 L2.6 0.9 L3.9 5.4 L0 2.8 L-3.9 5.4 L-2.6 0.9 L-6.2 -2 L-1.6 -2.1 Z" fill="none" stroke="#888" stroke-width="1"/></svg>
<svg style="left:0;top:0" width="300" height="520"><path d="M241.5 410 H261 L266.5 415.5 V439.5 H241.5 Z" fill="#f8f8f8" stroke="#c8c8c8" stroke-width="1"/><path d="M261 410 V415.5 H266.5" fill="#eee" stroke="#c8c8c8"/><path d="M249 422 L245 425.5 L249 429 M252 430 L256 421 M259 422 L263 425.5 L259 429" fill="none" stroke="#d67ad6" stroke-width="1"/></svg>
<div class="t" style="left:276px;top:416.6px;font-size:17px;color:#3d3d3d;font-weight:normal;">dataset.xml~3</div>
<div class="t" style="left:826.5px;top:416.6px;font-size:17px;color:#9a9a9a;font-weight:normal;">y 17:15</div>
<svg style="left:0;top:0" width="960" height="560"><path transform="translate(913 425)" d="M0 -6.5 L1.6 -2.1 L6.2 -2 L2.6 0.9 L3.9 5.4 L0 2.8 L-3.9 5.4 L-2.6 0.9 L-6.2 -2 L-1.6 -2.1 Z" fill="none" stroke="#888" stroke-width="1"/></svg>
<svg style="left:0;top:0" width="300" height="520"><path d="M241.5 462 H261 L266.5 467.5 V491.5 H241.5 Z" fill="#f8f8f8" stroke="#c8c8c8" stroke-width="1"/><path d="M261 462 V467.5 H266.5" fill="#eee" stroke="#c8c8c8"/><path d="M249 474 L245 477.5 L249 481 M252 482 L256 473 M259 474 L263 477.5 L259 481" fill="none" stroke="#d67ad6" stroke-width="1"/></svg>
<div class="t" style="left:276px;top:468.6px;font-size:17px;color:#3d3d3d;font-weight:normal;">dataset.xml~4</div>
<div class="t" style="left:826.5px;top:468.6px;font-size:17px;color:#9a9a9a;font-weight:normal;">y 17:15</div>
<svg style="left:0;top:0" width="960" height="560"><path transform="translate(913 477)" d="M0 -6.5 L1.6 -2.1 L6.2 -2 L2.6 0.9 L3.9 5.4 L0 2.8 L-3.9 5.4 L-2.6 0.9 L-6.2 -2 L-1.6 -2.1 Z" fill="none" stroke="#888" stroke-width="1"/></svg>
<svg style="left:0;top:0" width="300" height="560"><path d="M241.5 514 H261 L266.5 519.5 V543.5 H241.5 Z" fill="#f8f8f8" stroke="#c8c8c8" stroke-width="1"/><path d="M261 514 V519.5 H266.5" fill="#eee" stroke="#c8c8c8"/><g font-family="Liberation Mono" font-size="6" fill="#888"><text x="245" y="524">0100</text><text x="245" y="531">0010</text><text x="245" y="538">1001</text></g></svg>
<div class="t" style="left:276px;top:520.6px;font-size:17px;color:#3d3d3d;font-weight:normal;">Gap-mCherry.czi</div>
<div class="t" style="left:826.5px;top:520.6px;font-size:17px;color:#9a9a9a;font-weight:normal;">ct 2020</div>
<svg style="left:0;top:0" width="960" height="560"><path transform="translate(913 529)" d="M0 -6.5 L1.6 -2.1 L6.2 -2 L2.6 0.9 L3.9 5.4 L0 2.8 L-3.9 5.4 L-2.6 0.9 L-6.2 -2 L-1.6 -2.1 Z" fill="none" stroke="#888" stroke-width="1"/></svg>
<div class="t" style="left:276px;top:104.6px;font-size:17px;color:transparent">interestpoints.n5<span style="display:inline-block;width:15px;height:15px;border-radius:50%;background:#26873a;margin-left:7px;vertical-align:-1px;position:relative"><svg style="left:0;top:0" width="15" height="15"><path d="M3.8 7.6 L6.5 10.2 L11.2 5.2" fill="none" stroke="#fff" stroke-width="1.5"/></svg></span></div>
<div class="t" style="left:276px;top:156.6px;font-size:17px;color:transparent">avg_blend_1x_fused_tp_0_ch_1.tif<span style="display:inline-block;width:15px;height:15px;border-radius:50%;background:#26873a;margin-left:7px;vertical-align:-1px;position:relative"><svg style="left:0;top:0" width="15" height="15"><path d="M3.8 7.6 L6.5 10.2 L11.2 5.2" fill="none" stroke="#fff" stroke-width="1.5"/></svg></span></div>
<div class="t" style="left:276px;top:208.6px;font-size:17px;color:transparent">dataset.h5<span style="display:inline-block;width:15px;height:15px;border-radius:50%;background:#26873a;margin-left:7px;vertical-align:-1px;position:relative"><svg style="left:0;top:0" width="15" height="15"><path d="M3.8 7.6 L6.5 10.2 L11.2 5.2" fill="none" stroke="#fff" stroke-width="1.5"/></svg></span></div>
<div class="t" style="left:276px;top:260.6px;font-size:17px;color:transparent">dataset.xml<span style="display:inline-block;width:15px;height:15px;border-radius:50%;background:#26873a;margin-left:7px;vertical-align:-1px;position:relative"><svg style="left:0;top:0" width="15" height="15"><path d="M3.8 7.6 L6.5 10.2 L11.2 5.2" fill="none" stroke="#fff" stroke-width="1.5"/></svg></span></div>
<div class="t" style="left:276px;top:312.6px;font-size:17px;color:transparent">dataset.xml~1<span style="display:inline-block;width:15px;height:15px;border-radius:50%;background:#26873a;margin-left:7px;vertical-align:-1px;position:relative"><svg style="left:0;top:0" width="15" height="15"><path d="M3.8 7.6 L6.5 10.2 L11.2 5.2" fill="none" stroke="#fff" stroke-width="1.5"/></svg></span></div>
<div class="t" style="left:276px;top:364.6px;font-size:17px;color:transparent">dataset.xml~2<span style="display:inline-block;width:15px;height:15px;border-radius:50%;background:#26873a;margin-left:7px;vertical-align:-1px;position:relative"><svg style="left:0;top:0" width="15" height="15"><path d="M3.8 7.6 L6.5 10.2 L11.2 5.2" fill="none" stroke="#fff" stroke-width="1.5"/></svg></span></div>
<div class="t" style="left:276px;top:416.6px;font-size:17px;color:transparent">dataset.xml~3<span style="display:inline-block;width:15px;height:15px;border-radius:50%;background:#26873a;margin-left:7px;vertical-align:-1px;position:relative"><svg style="left:0;top:0" width="15" height="15"><path d="M3.8 7.6 L6.5 10.2 L11.2 5.2" fill="none" stroke="#fff" stroke-width="1.5"/></svg></span></div>
<div class="t" style="left:276px;top:468.6px;font-size:17px;color:transparent">dataset.xml~4<span style="display:inline-block;width:15px;height:15px;border-radius:50%;background:#26873a;margin-left:7px;vertical-align:-1px;position:relative"><svg style="left:0;top:0" width="15" height="15"><path d="M3.8 7.6 L6.5 10.2 L11.2 5.2" fill="none" stroke="#fff" stroke-width="1.5"/></svg></span></div>
<div class="t" style="left:276px;top:520.6px;font-size:17px;color:transparent">Gap-mCherry.czi<span style="display:inline-block;width:15px;height:15px;border-radius:50%;background:#26873a;margin-left:7px;vertical-align:-1px;position:relative"><svg style="left:0;top:0" width="15" height="15"><path d="M3.8 7.6 L6.5 10.2 L11.2 5.2" fill="none" stroke="#fff" stroke-width="1.5"/></svg></span></div>
<div class="a" style="left:600px;top:812.5px;width:360px;height:1px;background:#e6e6e6"></div>
<div class="t" style="left:821px;top:820.6px;font-size:17px;color:#666;font-weight:normal;">elected (2.9 GB)</div>
</div>
<div class="a" id="avg" style="left:525px;top:26px;width:303px;height:695px;background:#eeeeee;border-radius:10px 10px 0 0;box-shadow:0 0 0 1px rgba(0,0,0,0.10),0 2px 6px rgba(0,0,0,0.25);overflow:hidden">
<div class="a" style="left:0;top:0;width:303px;height:37px;background:#ebebeb;border-bottom:1px solid #d0d0d0"></div>
<div class="t" style="left:22.5px;top:10.5px;font-size:16px;font-weight:bold;color:#454545">avg_blend_1x_fused_tp_0_...</div>
<svg style="left:0;top:0" width="303" height="40"><circle cx="285" cy="18" r="11" fill="#dcdcdc"/><path d="M281.3 14.3 L288.7 21.7 M288.7 14.3 L281.3 21.7" stroke="#2e2e2e" stroke-width="1.4"/></svg>
<div class="t" style="left:5px;top:37.8px;font-size:12.3px;color:#1a1a1a">444/906; 242.92x509.28 µm (881x1847); 16-bit; 2.7GB</div>
<div class="a" style="left:5px;top:53px;width:293px;height:615px;overflow:hidden"><svg style="left:0;top:0" width="293" height="615" viewBox="530 79 293 615"><defs><filter id="blA" x="-50%" y="-50%" width="200%" height="200%"><feGaussianBlur stdDeviation="7"/></filter><filter id="bsA" x="-50%" y="-50%" width="200%" height="200%"><feGaussianBlur stdDeviation="0.9"/></filter><filter id="bmA" x="-50%" y="-50%" width="200%" height="200%"><feGaussianBlur stdDeviation="2.5"/></filter><filter id="bhA" x="-50%" y="-50%" width="200%" height="200%"><feGaussianBlur stdDeviation="5"/></filter><filter id="bbA" x="-50%" y="-50%" width="200%" height="200%"><feGaussianBlur stdDeviation="6"/></filter><filter id="biA" x="-50%" y="-50%" width="200%" height="200%"><feGaussianBlur stdDeviation="12"/></filter><clipPath id="ciA"><path d="M786.1 366.0 C787.0 373.8 787.6 381.6 788.2 389.4 C788.8 397.2 789.3 405.0 789.6 412.7 C789.9 420.4 790.0 428.2 790.0 435.8 C790.0 443.4 789.9 450.9 789.7 458.4 C789.5 465.8 789.1 473.3 788.6 480.5 C788.1 487.7 787.4 494.9 786.6 501.8 C785.8 508.7 784.9 515.5 783.9 522.1 C782.9 528.7 781.8 535.2 780.5 541.4 C779.2 547.6 777.8 553.6 776.3 559.4 C774.8 565.2 773.1 570.8 771.4 576.1 C769.7 581.4 767.8 586.4 765.9 591.2 C764.0 596.0 761.9 600.5 759.8 604.7 C757.7 608.9 755.4 613.0 753.1 616.6 C750.8 620.2 748.3 623.6 745.8 626.6 C743.3 629.6 740.8 632.3 738.2 634.7 C735.6 637.1 732.8 639.2 730.0 640.9 C727.2 642.6 724.4 644.0 721.5 645.1 C718.6 646.2 715.7 646.9 712.7 647.3 C709.7 647.7 706.7 647.7 703.6 647.4 C700.5 647.1 697.4 646.5 694.3 645.5 C691.2 644.5 688.0 643.2 684.9 641.6 C681.8 640.0 678.6 638.0 675.4 635.7 C672.2 633.4 669.0 630.8 665.8 627.9 C662.6 625.0 659.5 621.8 656.4 618.2 C653.3 614.7 650.1 610.7 647.0 606.6 C643.9 602.5 640.8 598.1 637.8 593.4 C634.8 588.7 631.7 583.8 628.8 578.6 C625.9 573.4 623.0 567.9 620.2 562.2 C617.4 556.5 614.6 550.6 611.9 544.5 C609.2 538.4 606.6 532.0 604.1 525.5 C601.6 519.0 599.1 512.2 596.8 505.4 C594.4 498.5 592.1 491.5 590.0 484.4 C587.9 477.3 585.8 470.0 583.9 462.6 C582.0 455.2 580.2 447.7 578.5 440.1 C576.8 432.5 575.2 424.9 573.8 417.2 C572.4 409.5 571.1 401.7 569.9 394.0 C568.7 386.3 567.7 378.6 566.8 370.8 C565.9 363.1 565.2 355.2 564.6 347.5 C564.0 339.8 563.6 332.2 563.3 324.6 C563.0 317.0 562.8 309.4 562.8 302.0 C562.8 294.6 563.0 287.2 563.3 280.0 C563.6 272.8 564.1 265.7 564.7 258.8 C565.3 251.9 566.1 245.1 567.0 238.5 C567.9 231.9 569.0 225.5 570.2 219.3 C571.4 213.1 572.8 207.1 574.3 201.3 C575.8 195.5 577.5 189.9 579.3 184.6 C581.1 179.3 583.0 174.3 585.0 169.5 C587.0 164.7 589.3 160.2 591.6 155.9 C593.9 151.7 596.3 147.7 598.8 144.0 C601.3 140.3 604.0 137.0 606.7 133.9 C609.4 130.8 612.2 128.1 615.1 125.7 C618.0 123.3 621.0 121.2 624.1 119.4 C627.2 117.6 630.3 116.1 633.5 115.0 C636.7 113.9 640.0 113.1 643.3 112.7 C646.6 112.3 649.9 112.2 653.3 112.5 C656.7 112.8 660.1 113.3 663.5 114.2 C666.9 115.1 670.4 116.4 673.8 118.0 C677.2 119.6 680.7 121.5 684.1 123.8 C687.5 126.1 690.9 128.7 694.3 131.6 C697.7 134.5 701.0 137.7 704.3 141.2 C707.6 144.7 710.9 148.6 714.1 152.7 C717.3 156.8 720.5 161.2 723.6 165.9 C726.7 170.6 729.7 175.5 732.6 180.7 C735.5 185.9 738.4 191.4 741.2 197.1 C744.0 202.8 746.6 208.8 749.2 214.9 C751.8 221.0 754.2 227.4 756.6 233.9 C759.0 240.4 761.3 247.2 763.4 254.1 C765.5 261.0 767.5 268.0 769.4 275.2 C771.3 282.4 773.1 289.7 774.8 297.1 C776.4 304.5 777.9 312.0 779.3 319.6 C780.7 327.2 782.0 335.0 783.1 342.7 C784.2 350.4 785.2 358.2 786.1 366.0Z"/></clipPath></defs><rect x="530" y="79" width="293" height="615" fill="#070707"/><path d="M786.1 366.0 C787.0 373.8 787.6 381.6 788.2 389.4 C788.8 397.2 789.3 405.0 789.6 412.7 C789.9 420.4 790.0 428.2 790.0 435.8 C790.0 443.4 789.9 450.9 789.7 458.4 C789.5 465.8 789.1 473.3 788.6 480.5 C788.1 487.7 787.4 494.9 786.6 501.8 C785.8 508.7 784.9 515.5 783.9 522.1 C782.9 528.7 781.8 535.2 780.5 541.4 C779.2 547.6 777.8 553.6 776.3 559.4 C774.8 565.2 773.1 570.8 771.4 576.1 C769.7 581.4 767.8 586.4 765.9 591.2 C764.0 596.0 761.9 600.5 759.8 604.7 C757.7 608.9 755.4 613.0 753.1 616.6 C750.8 620.2 748.3 623.6 745.8 626.6 C743.3 629.6 740.8 632.3 738.2 634.7 C735.6 637.1 732.8 639.2 730.0 640.9 C727.2 642.6 724.4 644.0 721.5 645.1 C718.6 646.2 715.7 646.9 712.7 647.3 C709.7 647.7 706.7 647.7 703.6 647.4 C700.5 647.1 697.4 646.5 694.3 645.5 C691.2 644.5 688.0 643.2 684.9 641.6 C681.8 640.0 678.6 638.0 675.4 635.7 C672.2 633.4 669.0 630.8 665.8 627.9 C662.6 625.0 659.5 621.8 656.4 618.2 C653.3 614.7 650.1 610.7 647.0 606.6 C643.9 602.5 640.8 598.1 637.8 593.4 C634.8 588.7 631.7 583.8 628.8 578.6 C625.9 573.4 623.0 567.9 620.2 562.2 C617.4 556.5 614.6 550.6 611.9 544.5 C609.2 538.4 606.6 532.0 604.1 525.5 C601.6 519.0 599.1 512.2 596.8 505.4 C594.4 498.5 592.1 491.5 590.0 484.4 C587.9 477.3 585.8 470.0 583.9 462.6 C582.0 455.2 580.2 447.7 578.5 440.1 C576.8 432.5 575.2 424.9 573.8 417.2 C572.4 409.5 571.1 401.7 569.9 394.0 C568.7 386.3 567.7 378.6 566.8 370.8 C565.9 363.1 565.2 355.2 564.6 347.5 C564.0 339.8 563.6 332.2 563.3 324.6 C563.0 317.0 562.8 309.4 562.8 302.0 C562.8 294.6 563.0 287.2 563.3 280.0 C563.6 272.8 564.1 265.7 564.7 258.8 C565.3 251.9 566.1 245.1 567.0 238.5 C567.9 231.9 569.0 225.5 570.2 219.3 C571.4 213.1 572.8 207.1 574.3 201.3 C575.8 195.5 577.5 189.9 579.3 184.6 C581.1 179.3 583.0 174.3 585.0 169.5 C587.0 164.7 589.3 160.2 591.6 155.9 C593.9 151.7 596.3 147.7 598.8 144.0 C601.3 140.3 604.0 137.0 606.7 133.9 C609.4 130.8 612.2 128.1 615.1 125.7 C618.0 123.3 621.0 121.2 624.1 119.4 C627.2 117.6 630.3 116.1 633.5 115.0 C636.7 113.9 640.0 113.1 643.3 112.7 C646.6 112.3 649.9 112.2 653.3 112.5 C656.7 112.8 660.1 113.3 663.5 114.2 C666.9 115.1 670.4 116.4 673.8 118.0 C677.2 119.6 680.7 121.5 684.1 123.8 C687.5 126.1 690.9 128.7 694.3 131.6 C697.7 134.5 701.0 137.7 704.3 141.2 C707.6 144.7 710.9 148.6 714.1 152.7 C717.3 156.8 720.5 161.2 723.6 165.9 C726.7 170.6 729.7 175.5 732.6 180.7 C735.5 185.9 738.4 191.4 741.2 197.1 C744.0 202.8 746.6 208.8 749.2 214.9 C751.8 221.0 754.2 227.4 756.6 233.9 C759.0 240.4 761.3 247.2 763.4 254.1 C765.5 261.0 767.5 268.0 769.4 275.2 C771.3 282.4 773.1 289.7 774.8 297.1 C776.4 304.5 777.9 312.0 779.3 319.6 C780.7 327.2 782.0 335.0 783.1 342.7 C784.2 350.4 785.2 358.2 786.1 366.0Z" fill="none" stroke="#1a1a1a" stroke-width="40" filter="url(#blA)"/><path d="M786.1 366.0 C787.0 373.8 787.6 381.6 788.2 389.4 C788.8 397.2 789.3 405.0 789.6 412.7 C789.9 420.4 790.0 428.2 790.0 435.8 C790.0 443.4 789.9 450.9 789.7 458.4 C789.5 465.8 789.1 473.3 788.6 480.5 C788.1 487.7 787.4 494.9 786.6 501.8 C785.8 508.7 784.9 515.5 783.9 522.1 C782.9 528.7 781.8 535.2 780.5 541.4 C779.2 547.6 777.8 553.6 776.3 559.4 C774.8 565.2 773.1 570.8 771.4 576.1 C769.7 581.4 767.8 586.4 765.9 591.2 C764.0 596.0 761.9 600.5 759.8 604.7 C757.7 608.9 755.4 613.0 753.1 616.6 C750.8 620.2 748.3 623.6 745.8 626.6 C743.3 629.6 740.8 632.3 738.2 634.7 C735.6 637.1 732.8 639.2 730.0 640.9 C727.2 642.6 724.4 644.0 721.5 645.1 C718.6 646.2 715.7 646.9 712.7 647.3 C709.7 647.7 706.7 647.7 703.6 647.4 C700.5 647.1 697.4 646.5 694.3 645.5 C691.2 644.5 688.0 643.2 684.9 641.6 C681.8 640.0 678.6 638.0 675.4 635.7 C672.2 633.4 669.0 630.8 665.8 627.9 C662.6 625.0 659.5 621.8 656.4 618.2 C653.3 614.7 650.1 610.7 647.0 606.6 C643.9 602.5 640.8 598.1 637.8 593.4 C634.8 588.7 631.7 583.8 628.8 578.6 C625.9 573.4 623.0 567.9 620.2 562.2 C617.4 556.5 614.6 550.6 611.9 544.5 C609.2 538.4 606.6 532.0 604.1 525.5 C601.6 519.0 599.1 512.2 596.8 505.4 C594.4 498.5 592.1 491.5 590.0 484.4 C587.9 477.3 585.8 470.0 583.9 462.6 C582.0 455.2 580.2 447.7 578.5 440.1 C576.8 432.5 575.2 424.9 573.8 417.2 C572.4 409.5 571.1 401.7 569.9 394.0 C568.7 386.3 567.7 378.6 566.8 370.8 C565.9 363.1 565.2 355.2 564.6 347.5 C564.0 339.8 563.6 332.2 563.3 324.6 C563.0 317.0 562.8 309.4 562.8 302.0 C562.8 294.6 563.0 287.2 563.3 280.0 C563.6 272.8 564.1 265.7 564.7 258.8 C565.3 251.9 566.1 245.1 567.0 238.5 C567.9 231.9 569.0 225.5 570.2 219.3 C571.4 213.1 572.8 207.1 574.3 201.3 C575.8 195.5 577.5 189.9 579.3 184.6 C581.1 179.3 583.0 174.3 585.0 169.5 C587.0 164.7 589.3 160.2 591.6 155.9 C593.9 151.7 596.3 147.7 598.8 144.0 C601.3 140.3 604.0 137.0 606.7 133.9 C609.4 130.8 612.2 128.1 615.1 125.7 C618.0 123.3 621.0 121.2 624.1 119.4 C627.2 117.6 630.3 116.1 633.5 115.0 C636.7 113.9 640.0 113.1 643.3 112.7 C646.6 112.3 649.9 112.2 653.3 112.5 C656.7 112.8 660.1 113.3 663.5 114.2 C666.9 115.1 670.4 116.4 673.8 118.0 C677.2 119.6 680.7 121.5 684.1 123.8 C687.5 126.1 690.9 128.7 694.3 131.6 C697.7 134.5 701.0 137.7 704.3 141.2 C707.6 144.7 710.9 148.6 714.1 152.7 C717.3 156.8 720.5 161.2 723.6 165.9 C726.7 170.6 729.7 175.5 732.6 180.7 C735.5 185.9 738.4 191.4 741.2 197.1 C744.0 202.8 746.6 208.8 749.2 214.9 C751.8 221.0 754.2 227.4 756.6 233.9 C759.0 240.4 761.3 247.2 763.4 254.1 C765.5 261.0 767.5 268.0 769.4 275.2 C771.3 282.4 773.1 289.7 774.8 297.1 C776.4 304.5 777.9 312.0 779.3 319.6 C780.7 327.2 782.0 335.0 783.1 342.7 C784.2 350.4 785.2 358.2 786.1 366.0Z" fill="none" stroke="#363636" stroke-width="16" filter="url(#bhA)"/><path d="M786.1 366.0 C787.0 373.8 787.6 381.6 788.2 389.4 C788.8 397.2 789.3 405.0 789.6 412.7 C789.9 420.4 790.0 428.2 790.0 435.8 C790.0 443.4 789.9 450.9 789.7 458.4 C789.5 465.8 789.1 473.3 788.6 480.5 C788.1 487.7 787.4 494.9 786.6 501.8 C785.8 508.7 784.9 515.5 783.9 522.1 C782.9 528.7 781.8 535.2 780.5 541.4 C779.2 547.6 777.8 553.6 776.3 559.4 C774.8 565.2 773.1 570.8 771.4 576.1 C769.7 581.4 767.8 586.4 765.9 591.2 C764.0 596.0 761.9 600.5 759.8 604.7 C757.7 608.9 755.4 613.0 753.1 616.6 C750.8 620.2 748.3 623.6 745.8 626.6 C743.3 629.6 740.8 632.3 738.2 634.7 C735.6 637.1 732.8 639.2 730.0 640.9 C727.2 642.6 724.4 644.0 721.5 645.1 C718.6 646.2 715.7 646.9 712.7 647.3 C709.7 647.7 706.7 647.7 703.6 647.4 C700.5 647.1 697.4 646.5 694.3 645.5 C691.2 644.5 688.0 643.2 684.9 641.6 C681.8 640.0 678.6 638.0 675.4 635.7 C672.2 633.4 669.0 630.8 665.8 627.9 C662.6 625.0 659.5 621.8 656.4 618.2 C653.3 614.7 650.1 610.7 647.0 606.6 C643.9 602.5 640.8 598.1 637.8 593.4 C634.8 588.7 631.7 583.8 628.8 578.6 C625.9 573.4 623.0 567.9 620.2 562.2 C617.4 556.5 614.6 550.6 611.9 544.5 C609.2 538.4 606.6 532.0 604.1 525.5 C601.6 519.0 599.1 512.2 596.8 505.4 C594.4 498.5 592.1 491.5 590.0 484.4 C587.9 477.3 585.8 470.0 583.9 462.6 C582.0 455.2 580.2 447.7 578.5 440.1 C576.8 432.5 575.2 424.9 573.8 417.2 C572.4 409.5 571.1 401.7 569.9 394.0 C568.7 386.3 567.7 378.6 566.8 370.8 C565.9 363.1 565.2 355.2 564.6 347.5 C564.0 339.8 563.6 332.2 563.3 324.6 C563.0 317.0 562.8 309.4 562.8 302.0 C562.8 294.6 563.0 287.2 563.3 280.0 C563.6 272.8 564.1 265.7 564.7 258.8 C565.3 251.9 566.1 245.1 567.0 238.5 C567.9 231.9 569.0 225.5 570.2 219.3 C571.4 213.1 572.8 207.1 574.3 201.3 C575.8 195.5 577.5 189.9 579.3 184.6 C581.1 179.3 583.0 174.3 585.0 169.5 C587.0 164.7 589.3 160.2 591.6 155.9 C593.9 151.7 596.3 147.7 598.8 144.0 C601.3 140.3 604.0 137.0 606.7 133.9 C609.4 130.8 612.2 128.1 615.1 125.7 C618.0 123.3 621.0 121.2 624.1 119.4 C627.2 117.6 630.3 116.1 633.5 115.0 C636.7 113.9 640.0 113.1 643.3 112.7 C646.6 112.3 649.9 112.2 653.3 112.5 C656.7 112.8 660.1 113.3 663.5 114.2 C666.9 115.1 670.4 116.4 673.8 118.0 C677.2 119.6 680.7 121.5 684.1 123.8 C687.5 126.1 690.9 128.7 694.3 131.6 C697.7 134.5 701.0 137.7 704.3 141.2 C707.6 144.7 710.9 148.6 714.1 152.7 C717.3 156.8 720.5 161.2 723.6 165.9 C726.7 170.6 729.7 175.5 732.6 180.7 C735.5 185.9 738.4 191.4 741.2 197.1 C744.0 202.8 746.6 208.8 749.2 214.9 C751.8 221.0 754.2 227.4 756.6 233.9 C759.0 240.4 761.3 247.2 763.4 254.1 C765.5 261.0 767.5 268.0 769.4 275.2 C771.3 282.4 773.1 289.7 774.8 297.1 C776.4 304.5 777.9 312.0 779.3 319.6 C780.7 327.2 782.0 335.0 783.1 342.7 C784.2 350.4 785.2 358.2 786.1 366.0Z" fill="#7b7b79"/><g clip-path="url(#ciA)"><path d="M786.1 366.0 C787.0 373.8 787.6 381.6 788.2 389.4 C788.8 397.2 789.3 405.0 789.6 412.7 C789.9 420.4 790.0 428.2 790.0 435.8 C790.0 443.4 789.9 450.9 789.7 458.4 C789.5 465.8 789.1 473.3 788.6 480.5 C788.1 487.7 787.4 494.9 786.6 501.8 C785.8 508.7 784.9 515.5 783.9 522.1 C782.9 528.7 781.8 535.2 780.5 541.4 C779.2 547.6 777.8 553.6 776.3 559.4 C774.8 565.2 773.1 570.8 771.4 576.1 C769.7 581.4 767.8 586.4 765.9 591.2 C764.0 596.0 761.9 600.5 759.8 604.7 C757.7 608.9 755.4 613.0 753.1 616.6 C750.8 620.2 748.3 623.6 745.8 626.6 C743.3 629.6 740.8 632.3 738.2 634.7 C735.6 637.1 732.8 639.2 730.0 640.9 C727.2 642.6 724.4 644.0 721.5 645.1 C718.6 646.2 715.7 646.9 712.7 647.3 C709.7 647.7 706.7 647.7 703.6 647.4 C700.5 647.1 697.4 646.5 694.3 645.5 C691.2 644.5 688.0 643.2 684.9 641.6 C681.8 640.0 678.6 638.0 675.4 635.7 C672.2 633.4 669.0 630.8 665.8 627.9 C662.6 625.0 659.5 621.8 656.4 618.2 C653.3 614.7 650.1 610.7 647.0 606.6 C643.9 602.5 640.8 598.1 637.8 593.4 C634.8 588.7 631.7 583.8 628.8 578.6 C625.9 573.4 623.0 567.9 620.2 562.2 C617.4 556.5 614.6 550.6 611.9 544.5 C609.2 538.4 606.6 532.0 604.1 525.5 C601.6 519.0 599.1 512.2 596.8 505.4 C594.4 498.5 592.1 491.5 590.0 484.4 C587.9 477.3 585.8 470.0 583.9 462.6 C582.0 455.2 580.2 447.7 578.5 440.1 C576.8 432.5 575.2 424.9 573.8 417.2 C572.4 409.5 571.1 401.7 569.9 394.0 C568.7 386.3 567.7 378.6 566.8 370.8 C565.9 363.1 565.2 355.2 564.6 347.5 C564.0 339.8 563.6 332.2 563.3 324.6 C563.0 317.0 562.8 309.4 562.8 302.0 C562.8 294.6 563.0 287.2 563.3 280.0 C563.6 272.8 564.1 265.7 564.7 258.8 C565.3 251.9 566.1 245.1 567.0 238.5 C567.9 231.9 569.0 225.5 570.2 219.3 C571.4 213.1 572.8 207.1 574.3 201.3 C575.8 195.5 577.5 189.9 579.3 184.6 C581.1 179.3 583.0 174.3 585.0 169.5 C587.0 164.7 589.3 160.2 591.6 155.9 C593.9 151.7 596.3 147.7 598.8 144.0 C601.3 140.3 604.0 137.0 606.7 133.9 C609.4 130.8 612.2 128.1 615.1 125.7 C618.0 123.3 621.0 121.2 624.1 119.4 C627.2 117.6 630.3 116.1 633.5 115.0 C636.7 113.9 640.0 113.1 643.3 112.7 C646.6 112.3 649.9 112.2 653.3 112.5 C656.7 112.8 660.1 113.3 663.5 114.2 C666.9 115.1 670.4 116.4 673.8 118.0 C677.2 119.6 680.7 121.5 684.1 123.8 C687.5 126.1 690.9 128.7 694.3 131.6 C697.7 134.5 701.0 137.7 704.3 141.2 C707.6 144.7 710.9 148.6 714.1 152.7 C717.3 156.8 720.5 161.2 723.6 165.9 C726.7 170.6 729.7 175.5 732.6 180.7 C735.5 185.9 738.4 191.4 741.2 197.1 C744.0 202.8 746.6 208.8 749.2 214.9 C751.8 221.0 754.2 227.4 756.6 233.9 C759.0 240.4 761.3 247.2 763.4 254.1 C765.5 261.0 767.5 268.0 769.4 275.2 C771.3 282.4 773.1 289.7 774.8 297.1 C776.4 304.5 777.9 312.0 779.3 319.6 C780.7 327.2 782.0 335.0 783.1 342.7 C784.2 350.4 785.2 358.2 786.1 366.0Z" fill="none" stroke="#8a8a88" stroke-width="30" filter="url(#biA)"/><circle cx="655" cy="198" r="7" fill="#e0e0e0" filter="url(#bbA)"/><circle cx="620" cy="260" r="22" fill="#868684" filter="url(#bbA)"/><circle cx="700" cy="330" r="20" fill="#848482" filter="url(#bbA)"/><circle cx="640" cy="440" r="22" fill="#848482" filter="url(#bbA)"/><circle cx="690" cy="560" r="16" fill="#8c8c8a" filter="url(#bbA)"/><circle cx="660" cy="520" r="18" fill="#868684" filter="url(#bbA)"/></g><path d="M786.1 366.0 C787.0 373.8 787.6 381.6 788.2 389.4 C788.8 397.2 789.3 405.0 789.6 412.7 C789.9 420.4 790.0 428.2 790.0 435.8 C790.0 443.4 789.9 450.9 789.7 458.4 C789.5 465.8 789.1 473.3 788.6 480.5 C788.1 487.7 787.4 494.9 786.6 501.8 C785.8 508.7 784.9 515.5 783.9 522.1 C782.9 528.7 781.8 535.2 780.5 541.4 C779.2 547.6 777.8 553.6 776.3 559.4 C774.8 565.2 773.1 570.8 771.4 576.1 C769.7 581.4 767.8 586.4 765.9 591.2 C764.0 596.0 761.9 600.5 759.8 604.7 C757.7 608.9 755.4 613.0 753.1 616.6 C750.8 620.2 748.3 623.6 745.8 626.6 C743.3 629.6 740.8 632.3 738.2 634.7 C735.6 637.1 732.8 639.2 730.0 640.9 C727.2 642.6 724.4 644.0 721.5 645.1 C718.6 646.2 715.7 646.9 712.7 647.3 C709.7 647.7 706.7 647.7 703.6 647.4 C700.5 647.1 697.4 646.5 694.3 645.5 C691.2 644.5 688.0 643.2 684.9 641.6 C681.8 640.0 678.6 638.0 675.4 635.7 C672.2 633.4 669.0 630.8 665.8 627.9 C662.6 625.0 659.5 621.8 656.4 618.2 C653.3 614.7 650.1 610.7 647.0 606.6 C643.9 602.5 640.8 598.1 637.8 593.4 C634.8 588.7 631.7 583.8 628.8 578.6 C625.9 573.4 623.0 567.9 620.2 562.2 C617.4 556.5 614.6 550.6 611.9 544.5 C609.2 538.4 606.6 532.0 604.1 525.5 C601.6 519.0 599.1 512.2 596.8 505.4 C594.4 498.5 592.1 491.5 590.0 484.4 C587.9 477.3 585.8 470.0 583.9 462.6 C582.0 455.2 580.2 447.7 578.5 440.1 C576.8 432.5 575.2 424.9 573.8 417.2 C572.4 409.5 571.1 401.7 569.9 394.0 C568.7 386.3 567.7 378.6 566.8 370.8 C565.9 363.1 565.2 355.2 564.6 347.5 C564.0 339.8 563.6 332.2 563.3 324.6 C563.0 317.0 562.8 309.4 562.8 302.0 C562.8 294.6 563.0 287.2 563.3 280.0 C563.6 272.8 564.1 265.7 564.7 258.8 C565.3 251.9 566.1 245.1 567.0 238.5 C567.9 231.9 569.0 225.5 570.2 219.3 C571.4 213.1 572.8 207.1 574.3 201.3 C575.8 195.5 577.5 189.9 579.3 184.6 C581.1 179.3 583.0 174.3 585.0 169.5 C587.0 164.7 589.3 160.2 591.6 155.9 C593.9 151.7 596.3 147.7 598.8 144.0 C601.3 140.3 604.0 137.0 606.7 133.9 C609.4 130.8 612.2 128.1 615.1 125.7 C618.0 123.3 621.0 121.2 624.1 119.4 C627.2 117.6 630.3 116.1 633.5 115.0 C636.7 113.9 640.0 113.1 643.3 112.7 C646.6 112.3 649.9 112.2 653.3 112.5 C656.7 112.8 660.1 113.3 663.5 114.2 C666.9 115.1 670.4 116.4 673.8 118.0 C677.2 119.6 680.7 121.5 684.1 123.8 C687.5 126.1 690.9 128.7 694.3 131.6 C697.7 134.5 701.0 137.7 704.3 141.2 C707.6 144.7 710.9 148.6 714.1 152.7 C717.3 156.8 720.5 161.2 723.6 165.9 C726.7 170.6 729.7 175.5 732.6 180.7 C735.5 185.9 738.4 191.4 741.2 197.1 C744.0 202.8 746.6 208.8 749.2 214.9 C751.8 221.0 754.2 227.4 756.6 233.9 C759.0 240.4 761.3 247.2 763.4 254.1 C765.5 261.0 767.5 268.0 769.4 275.2 C771.3 282.4 773.1 289.7 774.8 297.1 C776.4 304.5 777.9 312.0 779.3 319.6 C780.7 327.2 782.0 335.0 783.1 342.7 C784.2 350.4 785.2 358.2 786.1 366.0Z" fill="none" stroke="#9a9a9a" stroke-width="12" filter="url(#bmA)"/><path d="M786.1 366.0 C787.0 373.8 787.6 381.6 788.2 389.4 C788.8 397.2 789.3 405.0 789.6 412.7 C789.9 420.4 790.0 428.2 790.0 435.8 C790.0 443.4 789.9 450.9 789.7 458.4 C789.5 465.8 789.1 473.3 788.6 480.5 C788.1 487.7 787.4 494.9 786.6 501.8 C785.8 508.7 784.9 515.5 783.9 522.1 C782.9 528.7 781.8 535.2 780.5 541.4 C779.2 547.6 777.8 553.6 776.3 559.4 C774.8 565.2 773.1 570.8 771.4 576.1 C769.7 581.4 767.8 586.4 765.9 591.2 C764.0 596.0 761.9 600.5 759.8 604.7 C757.7 608.9 755.4 613.0 753.1 616.6 C750.8 620.2 748.3 623.6 745.8 626.6 C743.3 629.6 740.8 632.3 738.2 634.7 C735.6 637.1 732.8 639.2 730.0 640.9 C727.2 642.6 724.4 644.0 721.5 645.1 C718.6 646.2 715.7 646.9 712.7 647.3 C709.7 647.7 706.7 647.7 703.6 647.4 C700.5 647.1 697.4 646.5 694.3 645.5 C691.2 644.5 688.0 643.2 684.9 641.6 C681.8 640.0 678.6 638.0 675.4 635.7 C672.2 633.4 669.0 630.8 665.8 627.9 C662.6 625.0 659.5 621.8 656.4 618.2 C653.3 614.7 650.1 610.7 647.0 606.6 C643.9 602.5 640.8 598.1 637.8 593.4 C634.8 588.7 631.7 583.8 628.8 578.6 C625.9 573.4 623.0 567.9 620.2 562.2 C617.4 556.5 614.6 550.6 611.9 544.5 C609.2 538.4 606.6 532.0 604.1 525.5 C601.6 519.0 599.1 512.2 596.8 505.4 C594.4 498.5 592.1 491.5 590.0 484.4 C587.9 477.3 585.8 470.0 583.9 462.6 C582.0 455.2 580.2 447.7 578.5 440.1 C576.8 432.5 575.2 424.9 573.8 417.2 C572.4 409.5 571.1 401.7 569.9 394.0 C568.7 386.3 567.7 378.6 566.8 370.8 C565.9 363.1 565.2 355.2 564.6 347.5 C564.0 339.8 563.6 332.2 563.3 324.6 C563.0 317.0 562.8 309.4 562.8 302.0 C562.8 294.6 563.0 287.2 563.3 280.0 C563.6 272.8 564.1 265.7 564.7 258.8 C565.3 251.9 566.1 245.1 567.0 238.5 C567.9 231.9 569.0 225.5 570.2 219.3 C571.4 213.1 572.8 207.1 574.3 201.3 C575.8 195.5 577.5 189.9 579.3 184.6 C581.1 179.3 583.0 174.3 585.0 169.5 C587.0 164.7 589.3 160.2 591.6 155.9 C593.9 151.7 596.3 147.7 598.8 144.0 C601.3 140.3 604.0 137.0 606.7 133.9 C609.4 130.8 612.2 128.1 615.1 125.7 C618.0 123.3 621.0 121.2 624.1 119.4 C627.2 117.6 630.3 116.1 633.5 115.0 C636.7 113.9 640.0 113.1 643.3 112.7 C646.6 112.3 649.9 112.2 653.3 112.5 C656.7 112.8 660.1 113.3 663.5 114.2 C666.9 115.1 670.4 116.4 673.8 118.0 C677.2 119.6 680.7 121.5 684.1 123.8 C687.5 126.1 690.9 128.7 694.3 131.6 C697.7 134.5 701.0 137.7 704.3 141.2 C707.6 144.7 710.9 148.6 714.1 152.7 C717.3 156.8 720.5 161.2 723.6 165.9 C726.7 170.6 729.7 175.5 732.6 180.7 C735.5 185.9 738.4 191.4 741.2 197.1 C744.0 202.8 746.6 208.8 749.2 214.9 C751.8 221.0 754.2 227.4 756.6 233.9 C759.0 240.4 761.3 247.2 763.4 254.1 C765.5 261.0 767.5 268.0 769.4 275.2 C771.3 282.4 773.1 289.7 774.8 297.1 C776.4 304.5 777.9 312.0 779.3 319.6 C780.7 327.2 782.0 335.0 783.1 342.7 C784.2 350.4 785.2 358.2 786.1 366.0Z" fill="none" stroke="#a8a8a8" stroke-width="6" filter="url(#bsA)"/><path d="M786.1 366.0 C787.0 373.8 787.6 381.6 788.2 389.4 C788.8 397.2 789.3 405.0 789.6 412.7 C789.9 420.4 790.0 428.2 790.0 435.8 C790.0 443.4 789.9 450.9 789.7 458.4 C789.5 465.8 789.1 473.3 788.6 480.5 C788.1 487.7 787.4 494.9 786.6 501.8 C785.8 508.7 784.9 515.5 783.9 522.1 C782.9 528.7 781.8 535.2 780.5 541.4 C779.2 547.6 777.8 553.6 776.3 559.4 C774.8 565.2 773.1 570.8 771.4 576.1 C769.7 581.4 767.8 586.4 765.9 591.2 C764.0 596.0 761.9 600.5 759.8 604.7 C757.7 608.9 755.4 613.0 753.1 616.6 C750.8 620.2 748.3 623.6 745.8 626.6 C743.3 629.6 740.8 632.3 738.2 634.7 C735.6 637.1 732.8 639.2 730.0 640.9 C727.2 642.6 724.4 644.0 721.5 645.1 C718.6 646.2 715.7 646.9 712.7 647.3 C709.7 647.7 706.7 647.7 703.6 647.4 C700.5 647.1 697.4 646.5 694.3 645.5 C691.2 644.5 688.0 643.2 684.9 641.6 C681.8 640.0 678.6 638.0 675.4 635.7 C672.2 633.4 669.0 630.8 665.8 627.9 C662.6 625.0 659.5 621.8 656.4 618.2 C653.3 614.7 650.1 610.7 647.0 606.6 C643.9 602.5 640.8 598.1 637.8 593.4 C634.8 588.7 631.7 583.8 628.8 578.6 C625.9 573.4 623.0 567.9 620.2 562.2 C617.4 556.5 614.6 550.6 611.9 544.5 C609.2 538.4 606.6 532.0 604.1 525.5 C601.6 519.0 599.1 512.2 596.8 505.4 C594.4 498.5 592.1 491.5 590.0 484.4 C587.9 477.3 585.8 470.0 583.9 462.6 C582.0 455.2 580.2 447.7 578.5 440.1 C576.8 432.5 575.2 424.9 573.8 417.2 C572.4 409.5 571.1 401.7 569.9 394.0 C568.7 386.3 567.7 378.6 566.8 370.8 C565.9 363.1 565.2 355.2 564.6 347.5 C564.0 339.8 563.6 332.2 563.3 324.6 C563.0 317.0 562.8 309.4 562.8 302.0 C562.8 294.6 563.0 287.2 563.3 280.0 C563.6 272.8 564.1 265.7 564.7 258.8 C565.3 251.9 566.1 245.1 567.0 238.5 C567.9 231.9 569.0 225.5 570.2 219.3 C571.4 213.1 572.8 207.1 574.3 201.3 C575.8 195.5 577.5 189.9 579.3 184.6 C581.1 179.3 583.0 174.3 585.0 169.5 C587.0 164.7 589.3 160.2 591.6 155.9 C593.9 151.7 596.3 147.7 598.8 144.0 C601.3 140.3 604.0 137.0 606.7 133.9 C609.4 130.8 612.2 128.1 615.1 125.7 C618.0 123.3 621.0 121.2 624.1 119.4 C627.2 117.6 630.3 116.1 633.5 115.0 C636.7 113.9 640.0 113.1 643.3 112.7 C646.6 112.3 649.9 112.2 653.3 112.5 C656.7 112.8 660.1 113.3 663.5 114.2 C666.9 115.1 670.4 116.4 673.8 118.0 C677.2 119.6 680.7 121.5 684.1 123.8 C687.5 126.1 690.9 128.7 694.3 131.6 C697.7 134.5 701.0 137.7 704.3 141.2 C707.6 144.7 710.9 148.6 714.1 152.7 C717.3 156.8 720.5 161.2 723.6 165.9 C726.7 170.6 729.7 175.5 732.6 180.7 C735.5 185.9 738.4 191.4 741.2 197.1 C744.0 202.8 746.6 208.8 749.2 214.9 C751.8 221.0 754.2 227.4 756.6 233.9 C759.0 240.4 761.3 247.2 763.4 254.1 C765.5 261.0 767.5 268.0 769.4 275.2 C771.3 282.4 773.1 289.7 774.8 297.1 C776.4 304.5 777.9 312.0 779.3 319.6 C780.7 327.2 782.0 335.0 783.1 342.7 C784.2 350.4 785.2 358.2 786.1 366.0Z" fill="none" stroke="#d6d6d6" stroke-width="8" stroke-dasharray="3 2.2" filter="url(#bsA)"/></svg><div class="a" style="left:133.5px;top:0;width:2px;height:615px;background:#f0f000"></div><div class="a" style="left:0;top:296px;width:293px;height:1px;background:#e8e8e8"></div><svg style="left:0;top:0" width="293" height="615"><g stroke="#1a1a1a" stroke-width="4" stroke-linecap="square"><path d="M134.5 297 V302.5 M134.5 309.5 V315 M125.5 306 H131 M138 306 H143.5"/></g><g stroke="#f4f4f4" stroke-width="2"><path d="M134.5 297.5 V302.5 M134.5 309.5 V314.5 M126 306 H131 M138 306 H143"/></g></svg></div>
<div class="a" style="left:5px;top:673px;width:12px;height:16px;background:#fafafa"></div>
<svg style="left:0;top:0" width="303" height="695"><path d="M8 676.5 L14 681 L8 685.5 Z" fill="#333"/></svg>
<div class="a" style="left:19px;top:673px;width:279px;height:16px;background:#cfcfcf;border-top:1px solid #bdbdbd"></div>
<svg style="left:0;top:0" width="303" height="695"><path d="M34 674 L21 681 L34 688" fill="#e2e2e2" stroke="#aaa" stroke-width="0.8"/><path d="M282 674 L295 681 L282 688" fill="#e2e2e2" stroke="#aaa" stroke-width="0.8"/><rect x="34" y="674" width="0.8" height="14" fill="#bbb"/><rect x="281.5" y="674" width="0.8" height="14" fill="#bbb"/><rect x="154" y="675" width="4.5" height="13" fill="#ececec" stroke="#aaa" stroke-width="0.6"/></svg>
</div>
<div class="a" id="xz" style="left:524px;top:721px;width:304px;height:292px;background:#eeeeee;box-shadow:0 1px 4px rgba(0,0,0,0.3)">
<div class="a" style="left:6px;top:0;width:293px;height:287px;overflow:hidden"><svg style="left:0;top:0" width="293" height="287" viewBox="530 721 293 287"><defs><filter id="blB" x="-50%" y="-50%" width="200%" height="200%"><feGaussianBlur stdDeviation="7"/></filter><filter id="bsB" x="-50%" y="-50%" width="200%" height="200%"><feGaussianBlur stdDeviation="0.9"/></filter><filter id="bmB" x="-50%" y="-50%" width="200%" height="200%"><feGaussianBlur stdDeviation="2.5"/></filter><filter id="bhB" x="-50%" y="-50%" width="200%" height="200%"><feGaussianBlur stdDeviation="5"/></filter><filter id="bbB" x="-50%" y="-50%" width="200%" height="200%"><feGaussianBlur stdDeviation="6"/></filter><filter id="biB" x="-50%" y="-50%" width="200%" height="200%"><feGaussianBlur stdDeviation="12"/></filter><clipPath id="ciB"><path d="M569 861 A110.5 110 0 1 1 790 861 A110.5 110 0 1 1 569 861Z"/></clipPath></defs><rect x="530" y="721" width="293" height="287" fill="#070707"/><path d="M569 861 A110.5 110 0 1 1 790 861 A110.5 110 0 1 1 569 861Z" fill="none" stroke="#1a1a1a" stroke-width="40" filter="url(#blB)"/><path d="M569 861 A110.5 110 0 1 1 790 861 A110.5 110 0 1 1 569 861Z" fill="none" stroke="#363636" stroke-width="16" filter="url(#bhB)"/><path d="M569 861 A110.5 110 0 1 1 790 861 A110.5 110 0 1 1 569 861Z" fill="#7b7b79"/><g clip-path="url(#ciB)"><path d="M569 861 A110.5 110 0 1 1 790 861 A110.5 110 0 1 1 569 861Z" fill="none" stroke="#8a8a88" stroke-width="30" filter="url(#biB)"/><circle cx="660" cy="810" r="25" fill="#848482" filter="url(#bbB)"/><circle cx="700" cy="920" r="25" fill="#868684" filter="url(#bbB)"/><circle cx="740" cy="860" r="18" fill="#828280" filter="url(#bbB)"/></g><path d="M569 861 A110.5 110 0 1 1 790 861 A110.5 110 0 1 1 569 861Z" fill="none" stroke="#9a9a9a" stroke-width="14" filter="url(#bmB)"/><path d="M569 861 A110.5 110 0 1 1 790 861 A110.5 110 0 1 1 569 861Z" fill="none" stroke="#a8a8a8" stroke-width="8" filter="url(#bsB)"/><path d="M569 861 A110.5 110 0 1 1 790 861 A110.5 110 0 1 1 569 861Z" fill="none" stroke="#d6d6d6" stroke-width="10" stroke-dasharray="3 2.2" filter="url(#bsB)"/></svg><div class="a" style="left:133.4px;top:0;width:2px;height:287px;background:#f0f000"></div><div class="a" style="left:0;top:132.7px;width:293px;height:2px;background:#f0f000"></div></div>
</div>
<div class="a" id="yz" style="left:975px;top:63px;width:312px;height:673px;background:#efefef;border-radius:9px 9px 0 0;box-shadow:0 1px 5px rgba(0,0,0,0.35);overflow:hidden">
<div class="a" style="left:0;top:0;width:312px;height:36px;background:#f9f9f9;border-bottom:1px solid #dedede"></div>
<div class="t" style="left:93px;top:10.5px;font-size:16px;font-weight:bold;color:#a9a9a9">YZ 402 (33.3%)</div>
<svg style="left:0;top:0" width="312" height="40"><path d="M290.5 14.5 L297.5 21.5 M297.5 14.5 L290.5 21.5" stroke="#555" stroke-width="1.2"/></svg>
<div class="t" style="left:5px;top:37.1px;font-size:12.3px;color:#222">249.81x509.28 µm (906x1847); 16-bit; 3.2MB</div>
<div class="a" style="left:5px;top:53px;width:302px;height:615px;overflow:hidden"><svg style="left:0;top:0" width="302" height="615" viewBox="980 116 302 615"><defs><filter id="blC" x="-50%" y="-50%" width="200%" height="200%"><feGaussianBlur stdDeviation="7"/></filter><filter id="bsC" x="-50%" y="-50%" width="200%" height="200%"><feGaussianBlur stdDeviation="0.9"/></filter><filter id="bmC" x="-50%" y="-50%" width="200%" height="200%"><feGaussianBlur stdDeviation="2.5"/></filter><filter id="bhC" x="-50%" y="-50%" width="200%" height="200%"><feGaussianBlur stdDeviation="5"/></filter><filter id="bbC" x="-50%" y="-50%" width="200%" height="200%"><feGaussianBlur stdDeviation="6"/></filter><filter id="biC" x="-50%" y="-50%" width="200%" height="200%"><feGaussianBlur stdDeviation="12"/></filter><clipPath id="ciC"><path d="M1237.5 394.9 C1238.7 402.8 1239.8 410.8 1240.8 418.7 C1241.8 426.6 1242.5 434.6 1243.2 442.5 C1243.9 450.4 1244.4 458.3 1244.8 466.1 C1245.2 473.9 1245.4 481.6 1245.5 489.2 C1245.6 496.8 1245.6 504.4 1245.4 511.8 C1245.2 519.2 1244.9 526.5 1244.5 533.6 C1244.1 540.7 1243.5 547.7 1242.8 554.5 C1242.1 561.3 1241.3 567.9 1240.3 574.3 C1239.3 580.7 1238.2 586.9 1237.0 592.9 C1235.8 598.9 1234.5 604.6 1233.0 610.1 C1231.5 615.6 1230.0 620.8 1228.3 625.8 C1226.6 630.8 1224.8 635.4 1222.9 639.8 C1221.0 644.2 1219.0 648.4 1216.9 652.2 C1214.8 656.0 1212.5 659.5 1210.2 662.7 C1207.9 665.9 1205.5 668.9 1203.0 671.4 C1200.5 673.9 1198.0 676.1 1195.3 678.0 C1192.6 679.9 1189.9 681.5 1187.1 682.7 C1184.3 683.9 1181.4 684.8 1178.5 685.3 C1175.6 685.8 1172.5 686.0 1169.5 685.8 C1166.5 685.6 1163.4 685.1 1160.2 684.3 C1157.0 683.4 1153.8 682.2 1150.6 680.7 C1147.4 679.2 1144.1 677.4 1140.8 675.2 C1137.5 673.0 1134.3 670.5 1131.0 667.6 C1127.7 664.8 1124.3 661.6 1121.0 658.1 C1117.7 654.6 1114.4 650.9 1111.1 646.8 C1107.8 642.7 1104.5 638.4 1101.2 633.7 C1097.9 629.1 1094.7 624.1 1091.5 618.9 C1088.3 613.7 1085.0 608.3 1081.9 602.6 C1078.8 596.9 1075.7 591.0 1072.7 584.9 C1069.7 578.8 1066.8 572.4 1063.9 565.9 C1061.0 559.4 1058.1 552.7 1055.4 545.8 C1052.7 538.9 1050.0 531.8 1047.5 524.6 C1045.0 517.4 1042.5 510.1 1040.2 502.7 C1037.9 495.3 1035.6 487.6 1033.5 480.0 C1031.4 472.4 1029.4 464.6 1027.5 456.9 C1025.6 449.1 1023.9 441.3 1022.3 433.5 C1020.7 425.7 1019.3 417.8 1018.0 409.9 C1016.7 402.0 1015.4 394.1 1014.4 386.3 C1013.4 378.5 1012.5 370.6 1011.8 362.9 C1011.1 355.2 1010.5 347.6 1010.1 340.0 C1009.7 332.4 1009.5 324.9 1009.4 317.5 C1009.3 310.1 1009.4 302.9 1009.6 295.8 C1009.9 288.7 1010.3 281.8 1010.9 275.0 C1011.5 268.2 1012.2 261.7 1013.1 255.3 C1014.0 248.9 1015.1 242.7 1016.3 236.7 C1017.5 230.7 1018.9 225.0 1020.4 219.5 C1021.9 214.0 1023.6 208.7 1025.4 203.7 C1027.2 198.7 1029.2 194.0 1031.3 189.6 C1033.4 185.2 1035.7 181.0 1038.0 177.1 C1040.3 173.2 1042.8 169.7 1045.4 166.4 C1048.0 163.2 1050.8 160.2 1053.6 157.6 C1056.4 155.0 1059.3 152.8 1062.3 150.8 C1065.3 148.9 1068.4 147.2 1071.6 145.9 C1074.8 144.6 1078.1 143.7 1081.4 143.1 C1084.7 142.5 1088.1 142.3 1091.5 142.4 C1094.9 142.5 1098.4 142.9 1101.9 143.7 C1105.4 144.5 1109.0 145.6 1112.5 147.1 C1116.0 148.6 1119.6 150.4 1123.2 152.5 C1126.8 154.6 1130.4 157.1 1133.9 159.9 C1137.5 162.7 1141.0 165.9 1144.5 169.3 C1148.0 172.7 1151.6 176.4 1155.0 180.5 C1158.4 184.6 1161.8 189.0 1165.1 193.6 C1168.4 198.2 1171.8 203.1 1175.0 208.3 C1178.2 213.5 1181.4 218.9 1184.4 224.6 C1187.5 230.3 1190.4 236.2 1193.3 242.4 C1196.2 248.6 1199.0 254.9 1201.7 261.5 C1204.4 268.1 1206.9 274.8 1209.4 281.7 C1211.9 288.6 1214.2 295.8 1216.5 303.0 C1218.8 310.2 1220.9 317.6 1222.9 325.1 C1224.9 332.6 1226.8 340.3 1228.6 348.0 C1230.3 355.7 1231.9 363.5 1233.4 371.3 C1234.9 379.1 1236.3 387.0 1237.5 394.9Z"/></clipPath></defs><rect x="980" y="116" width="302" height="615" fill="#070707"/><path d="M1237.5 394.9 C1238.7 402.8 1239.8 410.8 1240.8 418.7 C1241.8 426.6 1242.5 434.6 1243.2 442.5 C1243.9 450.4 1244.4 458.3 1244.8 466.1 C1245.2 473.9 1245.4 481.6 1245.5 489.2 C1245.6 496.8 1245.6 504.4 1245.4 511.8 C1245.2 519.2 1244.9 526.5 1244.5 533.6 C1244.1 540.7 1243.5 547.7 1242.8 554.5 C1242.1 561.3 1241.3 567.9 1240.3 574.3 C1239.3 580.7 1238.2 586.9 1237.0 592.9 C1235.8 598.9 1234.5 604.6 1233.0 610.1 C1231.5 615.6 1230.0 620.8 1228.3 625.8 C1226.6 630.8 1224.8 635.4 1222.9 639.8 C1221.0 644.2 1219.0 648.4 1216.9 652.2 C1214.8 656.0 1212.5 659.5 1210.2 662.7 C1207.9 665.9 1205.5 668.9 1203.0 671.4 C1200.5 673.9 1198.0 676.1 1195.3 678.0 C1192.6 679.9 1189.9 681.5 1187.1 682.7 C1184.3 683.9 1181.4 684.8 1178.5 685.3 C1175.6 685.8 1172.5 686.0 1169.5 685.8 C1166.5 685.6 1163.4 685.1 1160.2 684.3 C1157.0 683.4 1153.8 682.2 1150.6 680.7 C1147.4 679.2 1144.1 677.4 1140.8 675.2 C1137.5 673.0 1134.3 670.5 1131.0 667.6 C1127.7 664.8 1124.3 661.6 1121.0 658.1 C1117.7 654.6 1114.4 650.9 1111.1 646.8 C1107.8 642.7 1104.5 638.4 1101.2 633.7 C1097.9 629.1 1094.7 624.1 1091.5 618.9 C1088.3 613.7 1085.0 608.3 1081.9 602.6 C1078.8 596.9 1075.7 591.0 1072.7 584.9 C1069.7 578.8 1066.8 572.4 1063.9 565.9 C1061.0 559.4 1058.1 552.7 1055.4 545.8 C1052.7 538.9 1050.0 531.8 1047.5 524.6 C1045.0 517.4 1042.5 510.1 1040.2 502.7 C1037.9 495.3 1035.6 487.6 1033.5 480.0 C1031.4 472.4 1029.4 464.6 1027.5 456.9 C1025.6 449.1 1023.9 441.3 1022.3 433.5 C1020.7 425.7 1019.3 417.8 1018.0 409.9 C1016.7 402.0 1015.4 394.1 1014.4 386.3 C1013.4 378.5 1012.5 370.6 1011.8 362.9 C1011.1 355.2 1010.5 347.6 1010.1 340.0 C1009.7 332.4 1009.5 324.9 1009.4 317.5 C1009.3 310.1 1009.4 302.9 1009.6 295.8 C1009.9 288.7 1010.3 281.8 1010.9 275.0 C1011.5 268.2 1012.2 261.7 1013.1 255.3 C1014.0 248.9 1015.1 242.7 1016.3 236.7 C1017.5 230.7 1018.9 225.0 1020.4 219.5 C1021.9 214.0 1023.6 208.7 1025.4 203.7 C1027.2 198.7 1029.2 194.0 1031.3 189.6 C1033.4 185.2 1035.7 181.0 1038.0 177.1 C1040.3 173.2 1042.8 169.7 1045.4 166.4 C1048.0 163.2 1050.8 160.2 1053.6 157.6 C1056.4 155.0 1059.3 152.8 1062.3 150.8 C1065.3 148.9 1068.4 147.2 1071.6 145.9 C1074.8 144.6 1078.1 143.7 1081.4 143.1 C1084.7 142.5 1088.1 142.3 1091.5 142.4 C1094.9 142.5 1098.4 142.9 1101.9 143.7 C1105.4 144.5 1109.0 145.6 1112.5 147.1 C1116.0 148.6 1119.6 150.4 1123.2 152.5 C1126.8 154.6 1130.4 157.1 1133.9 159.9 C1137.5 162.7 1141.0 165.9 1144.5 169.3 C1148.0 172.7 1151.6 176.4 1155.0 180.5 C1158.4 184.6 1161.8 189.0 1165.1 193.6 C1168.4 198.2 1171.8 203.1 1175.0 208.3 C1178.2 213.5 1181.4 218.9 1184.4 224.6 C1187.5 230.3 1190.4 236.2 1193.3 242.4 C1196.2 248.6 1199.0 254.9 1201.7 261.5 C1204.4 268.1 1206.9 274.8 1209.4 281.7 C1211.9 288.6 1214.2 295.8 1216.5 303.0 C1218.8 310.2 1220.9 317.6 1222.9 325.1 C1224.9 332.6 1226.8 340.3 1228.6 348.0 C1230.3 355.7 1231.9 363.5 1233.4 371.3 C1234.9 379.1 1236.3 387.0 1237.5 394.9Z" fill="none" stroke="#1a1a1a" stroke-width="40" filter="url(#blC)"/><path d="M1237.5 394.9 C1238.7 402.8 1239.8 410.8 1240.8 418.7 C1241.8 426.6 1242.5 434.6 1243.2 442.5 C1243.9 450.4 1244.4 458.3 1244.8 466.1 C1245.2 473.9 1245.4 481.6 1245.5 489.2 C1245.6 496.8 1245.6 504.4 1245.4 511.8 C1245.2 519.2 1244.9 526.5 1244.5 533.6 C1244.1 540.7 1243.5 547.7 1242.8 554.5 C1242.1 561.3 1241.3 567.9 1240.3 574.3 C1239.3 580.7 1238.2 586.9 1237.0 592.9 C1235.8 598.9 1234.5 604.6 1233.0 610.1 C1231.5 615.6 1230.0 620.8 1228.3 625.8 C1226.6 630.8 1224.8 635.4 1222.9 639.8 C1221.0 644.2 1219.0 648.4 1216.9 652.2 C1214.8 656.0 1212.5 659.5 1210.2 662.7 C1207.9 665.9 1205.5 668.9 1203.0 671.4 C1200.5 673.9 1198.0 676.1 1195.3 678.0 C1192.6 679.9 1189.9 681.5 1187.1 682.7 C1184.3 683.9 1181.4 684.8 1178.5 685.3 C1175.6 685.8 1172.5 686.0 1169.5 685.8 C1166.5 685.6 1163.4 685.1 1160.2 684.3 C1157.0 683.4 1153.8 682.2 1150.6 680.7 C1147.4 679.2 1144.1 677.4 1140.8 675.2 C1137.5 673.0 1134.3 670.5 1131.0 667.6 C1127.7 664.8 1124.3 661.6 1121.0 658.1 C1117.7 654.6 1114.4 650.9 1111.1 646.8 C1107.8 642.7 1104.5 638.4 1101.2 633.7 C1097.9 629.1 1094.7 624.1 1091.5 618.9 C1088.3 613.7 1085.0 608.3 1081.9 602.6 C1078.8 596.9 1075.7 591.0 1072.7 584.9 C1069.7 578.8 1066.8 572.4 1063.9 565.9 C1061.0 559.4 1058.1 552.7 1055.4 545.8 C1052.7 538.9 1050.0 531.8 1047.5 524.6 C1045.0 517.4 1042.5 510.1 1040.2 502.7 C1037.9 495.3 1035.6 487.6 1033.5 480.0 C1031.4 472.4 1029.4 464.6 1027.5 456.9 C1025.6 449.1 1023.9 441.3 1022.3 433.5 C1020.7 425.7 1019.3 417.8 1018.0 409.9 C1016.7 402.0 1015.4 394.1 1014.4 386.3 C1013.4 378.5 1012.5 370.6 1011.8 362.9 C1011.1 355.2 1010.5 347.6 1010.1 340.0 C1009.7 332.4 1009.5 324.9 1009.4 317.5 C1009.3 310.1 1009.4 302.9 1009.6 295.8 C1009.9 288.7 1010.3 281.8 1010.9 275.0 C1011.5 268.2 1012.2 261.7 1013.1 255.3 C1014.0 248.9 1015.1 242.7 1016.3 236.7 C1017.5 230.7 1018.9 225.0 1020.4 219.5 C1021.9 214.0 1023.6 208.7 1025.4 203.7 C1027.2 198.7 1029.2 194.0 1031.3 189.6 C1033.4 185.2 1035.7 181.0 1038.0 177.1 C1040.3 173.2 1042.8 169.7 1045.4 166.4 C1048.0 163.2 1050.8 160.2 1053.6 157.6 C1056.4 155.0 1059.3 152.8 1062.3 150.8 C1065.3 148.9 1068.4 147.2 1071.6 145.9 C1074.8 144.6 1078.1 143.7 1081.4 143.1 C1084.7 142.5 1088.1 142.3 1091.5 142.4 C1094.9 142.5 1098.4 142.9 1101.9 143.7 C1105.4 144.5 1109.0 145.6 1112.5 147.1 C1116.0 148.6 1119.6 150.4 1123.2 152.5 C1126.8 154.6 1130.4 157.1 1133.9 159.9 C1137.5 162.7 1141.0 165.9 1144.5 169.3 C1148.0 172.7 1151.6 176.4 1155.0 180.5 C1158.4 184.6 1161.8 189.0 1165.1 193.6 C1168.4 198.2 1171.8 203.1 1175.0 208.3 C1178.2 213.5 1181.4 218.9 1184.4 224.6 C1187.5 230.3 1190.4 236.2 1193.3 242.4 C1196.2 248.6 1199.0 254.9 1201.7 261.5 C1204.4 268.1 1206.9 274.8 1209.4 281.7 C1211.9 288.6 1214.2 295.8 1216.5 303.0 C1218.8 310.2 1220.9 317.6 1222.9 325.1 C1224.9 332.6 1226.8 340.3 1228.6 348.0 C1230.3 355.7 1231.9 363.5 1233.4 371.3 C1234.9 379.1 1236.3 387.0 1237.5 394.9Z" fill="none" stroke="#363636" stroke-width="16" filter="url(#bhC)"/><path d="M1237.5 394.9 C1238.7 402.8 1239.8 410.8 1240.8 418.7 C1241.8 426.6 1242.5 434.6 1243.2 442.5 C1243.9 450.4 1244.4 458.3 1244.8 466.1 C1245.2 473.9 1245.4 481.6 1245.5 489.2 C1245.6 496.8 1245.6 504.4 1245.4 511.8 C1245.2 519.2 1244.9 526.5 1244.5 533.6 C1244.1 540.7 1243.5 547.7 1242.8 554.5 C1242.1 561.3 1241.3 567.9 1240.3 574.3 C1239.3 580.7 1238.2 586.9 1237.0 592.9 C1235.8 598.9 1234.5 604.6 1233.0 610.1 C1231.5 615.6 1230.0 620.8 1228.3 625.8 C1226.6 630.8 1224.8 635.4 1222.9 639.8 C1221.0 644.2 1219.0 648.4 1216.9 652.2 C1214.8 656.0 1212.5 659.5 1210.2 662.7 C1207.9 665.9 1205.5 668.9 1203.0 671.4 C1200.5 673.9 1198.0 676.1 1195.3 678.0 C1192.6 679.9 1189.9 681.5 1187.1 682.7 C1184.3 683.9 1181.4 684.8 1178.5 685.3 C1175.6 685.8 1172.5 686.0 1169.5 685.8 C1166.5 685.6 1163.4 685.1 1160.2 684.3 C1157.0 683.4 1153.8 682.2 1150.6 680.7 C1147.4 679.2 1144.1 677.4 1140.8 675.2 C1137.5 673.0 1134.3 670.5 1131.0 667.6 C1127.7 664.8 1124.3 661.6 1121.0 658.1 C1117.7 654.6 1114.4 650.9 1111.1 646.8 C1107.8 642.7 1104.5 638.4 1101.2 633.7 C1097.9 629.1 1094.7 624.1 1091.5 618.9 C1088.3 613.7 1085.0 608.3 1081.9 602.6 C1078.8 596.9 1075.7 591.0 1072.7 584.9 C1069.7 578.8 1066.8 572.4 1063.9 565.9 C1061.0 559.4 1058.1 552.7 1055.4 545.8 C1052.7 538.9 1050.0 531.8 1047.5 524.6 C1045.0 517.4 1042.5 510.1 1040.2 502.7 C1037.9 495.3 1035.6 487.6 1033.5 480.0 C1031.4 472.4 1029.4 464.6 1027.5 456.9 C1025.6 449.1 1023.9 441.3 1022.3 433.5 C1020.7 425.7 1019.3 417.8 1018.0 409.9 C1016.7 402.0 1015.4 394.1 1014.4 386.3 C1013.4 378.5 1012.5 370.6 1011.8 362.9 C1011.1 355.2 1010.5 347.6 1010.1 340.0 C1009.7 332.4 1009.5 324.9 1009.4 317.5 C1009.3 310.1 1009.4 302.9 1009.6 295.8 C1009.9 288.7 1010.3 281.8 1010.9 275.0 C1011.5 268.2 1012.2 261.7 1013.1 255.3 C1014.0 248.9 1015.1 242.7 1016.3 236.7 C1017.5 230.7 1018.9 225.0 1020.4 219.5 C1021.9 214.0 1023.6 208.7 1025.4 203.7 C1027.2 198.7 1029.2 194.0 1031.3 189.6 C1033.4 185.2 1035.7 181.0 1038.0 177.1 C1040.3 173.2 1042.8 169.7 1045.4 166.4 C1048.0 163.2 1050.8 160.2 1053.6 157.6 C1056.4 155.0 1059.3 152.8 1062.3 150.8 C1065.3 148.9 1068.4 147.2 1071.6 145.9 C1074.8 144.6 1078.1 143.7 1081.4 143.1 C1084.7 142.5 1088.1 142.3 1091.5 142.4 C1094.9 142.5 1098.4 142.9 1101.9 143.7 C1105.4 144.5 1109.0 145.6 1112.5 147.1 C1116.0 148.6 1119.6 150.4 1123.2 152.5 C1126.8 154.6 1130.4 157.1 1133.9 159.9 C1137.5 162.7 1141.0 165.9 1144.5 169.3 C1148.0 172.7 1151.6 176.4 1155.0 180.5 C1158.4 184.6 1161.8 189.0 1165.1 193.6 C1168.4 198.2 1171.8 203.1 1175.0 208.3 C1178.2 213.5 1181.4 218.9 1184.4 224.6 C1187.5 230.3 1190.4 236.2 1193.3 242.4 C1196.2 248.6 1199.0 254.9 1201.7 261.5 C1204.4 268.1 1206.9 274.8 1209.4 281.7 C1211.9 288.6 1214.2 295.8 1216.5 303.0 C1218.8 310.2 1220.9 317.6 1222.9 325.1 C1224.9 332.6 1226.8 340.3 1228.6 348.0 C1230.3 355.7 1231.9 363.5 1233.4 371.3 C1234.9 379.1 1236.3 387.0 1237.5 394.9Z" fill="#7b7b79"/><g clip-path="url(#ciC)"><path d="M1237.5 394.9 C1238.7 402.8 1239.8 410.8 1240.8 418.7 C1241.8 426.6 1242.5 434.6 1243.2 442.5 C1243.9 450.4 1244.4 458.3 1244.8 466.1 C1245.2 473.9 1245.4 481.6 1245.5 489.2 C1245.6 496.8 1245.6 504.4 1245.4 511.8 C1245.2 519.2 1244.9 526.5 1244.5 533.6 C1244.1 540.7 1243.5 547.7 1242.8 554.5 C1242.1 561.3 1241.3 567.9 1240.3 574.3 C1239.3 580.7 1238.2 586.9 1237.0 592.9 C1235.8 598.9 1234.5 604.6 1233.0 610.1 C1231.5 615.6 1230.0 620.8 1228.3 625.8 C1226.6 630.8 1224.8 635.4 1222.9 639.8 C1221.0 644.2 1219.0 648.4 1216.9 652.2 C1214.8 656.0 1212.5 659.5 1210.2 662.7 C1207.9 665.9 1205.5 668.9 1203.0 671.4 C1200.5 673.9 1198.0 676.1 1195.3 678.0 C1192.6 679.9 1189.9 681.5 1187.1 682.7 C1184.3 683.9 1181.4 684.8 1178.5 685.3 C1175.6 685.8 1172.5 686.0 1169.5 685.8 C1166.5 685.6 1163.4 685.1 1160.2 684.3 C1157.0 683.4 1153.8 682.2 1150.6 680.7 C1147.4 679.2 1144.1 677.4 1140.8 675.2 C1137.5 673.0 1134.3 670.5 1131.0 667.6 C1127.7 664.8 1124.3 661.6 1121.0 658.1 C1117.7 654.6 1114.4 650.9 1111.1 646.8 C1107.8 642.7 1104.5 638.4 1101.2 633.7 C1097.9 629.1 1094.7 624.1 1091.5 618.9 C1088.3 613.7 1085.0 608.3 1081.9 602.6 C1078.8 596.9 1075.7 591.0 1072.7 584.9 C1069.7 578.8 1066.8 572.4 1063.9 565.9 C1061.0 559.4 1058.1 552.7 1055.4 545.8 C1052.7 538.9 1050.0 531.8 1047.5 524.6 C1045.0 517.4 1042.5 510.1 1040.2 502.7 C1037.9 495.3 1035.6 487.6 1033.5 480.0 C1031.4 472.4 1029.4 464.6 1027.5 456.9 C1025.6 449.1 1023.9 441.3 1022.3 433.5 C1020.7 425.7 1019.3 417.8 1018.0 409.9 C1016.7 402.0 1015.4 394.1 1014.4 386.3 C1013.4 378.5 1012.5 370.6 1011.8 362.9 C1011.1 355.2 1010.5 347.6 1010.1 340.0 C1009.7 332.4 1009.5 324.9 1009.4 317.5 C1009.3 310.1 1009.4 302.9 1009.6 295.8 C1009.9 288.7 1010.3 281.8 1010.9 275.0 C1011.5 268.2 1012.2 261.7 1013.1 255.3 C1014.0 248.9 1015.1 242.7 1016.3 236.7 C1017.5 230.7 1018.9 225.0 1020.4 219.5 C1021.9 214.0 1023.6 208.7 1025.4 203.7 C1027.2 198.7 1029.2 194.0 1031.3 189.6 C1033.4 185.2 1035.7 181.0 1038.0 177.1 C1040.3 173.2 1042.8 169.7 1045.4 166.4 C1048.0 163.2 1050.8 160.2 1053.6 157.6 C1056.4 155.0 1059.3 152.8 1062.3 150.8 C1065.3 148.9 1068.4 147.2 1071.6 145.9 C1074.8 144.6 1078.1 143.7 1081.4 143.1 C1084.7 142.5 1088.1 142.3 1091.5 142.4 C1094.9 142.5 1098.4 142.9 1101.9 143.7 C1105.4 144.5 1109.0 145.6 1112.5 147.1 C1116.0 148.6 1119.6 150.4 1123.2 152.5 C1126.8 154.6 1130.4 157.1 1133.9 159.9 C1137.5 162.7 1141.0 165.9 1144.5 169.3 C1148.0 172.7 1151.6 176.4 1155.0 180.5 C1158.4 184.6 1161.8 189.0 1165.1 193.6 C1168.4 198.2 1171.8 203.1 1175.0 208.3 C1178.2 213.5 1181.4 218.9 1184.4 224.6 C1187.5 230.3 1190.4 236.2 1193.3 242.4 C1196.2 248.6 1199.0 254.9 1201.7 261.5 C1204.4 268.1 1206.9 274.8 1209.4 281.7 C1211.9 288.6 1214.2 295.8 1216.5 303.0 C1218.8 310.2 1220.9 317.6 1222.9 325.1 C1224.9 332.6 1226.8 340.3 1228.6 348.0 C1230.3 355.7 1231.9 363.5 1233.4 371.3 C1234.9 379.1 1236.3 387.0 1237.5 394.9Z" fill="none" stroke="#8a8a88" stroke-width="30" filter="url(#biC)"/><circle cx="1128" cy="223" r="8" fill="#b8b8b6" filter="url(#bbC)"/><circle cx="1075" cy="260" r="22" fill="#868684" filter="url(#bbC)"/><circle cx="1150" cy="330" r="20" fill="#848482" filter="url(#bbC)"/><circle cx="1090" cy="400" r="25" fill="#848482" filter="url(#bbC)"/><circle cx="1170" cy="500" r="20" fill="#848482" filter="url(#bbC)"/><circle cx="1140" cy="560" r="18" fill="#8a8a88" filter="url(#bbC)"/><circle cx="1190" cy="600" r="18" fill="#868684" filter="url(#bbC)"/></g><path d="M1237.5 394.9 C1238.7 402.8 1239.8 410.8 1240.8 418.7 C1241.8 426.6 1242.5 434.6 1243.2 442.5 C1243.9 450.4 1244.4 458.3 1244.8 466.1 C1245.2 473.9 1245.4 481.6 1245.5 489.2 C1245.6 496.8 1245.6 504.4 1245.4 511.8 C1245.2 519.2 1244.9 526.5 1244.5 533.6 C1244.1 540.7 1243.5 547.7 1242.8 554.5 C1242.1 561.3 1241.3 567.9 1240.3 574.3 C1239.3 580.7 1238.2 586.9 1237.0 592.9 C1235.8 598.9 1234.5 604.6 1233.0 610.1 C1231.5 615.6 1230.0 620.8 1228.3 625.8 C1226.6 630.8 1224.8 635.4 1222.9 639.8 C1221.0 644.2 1219.0 648.4 1216.9 652.2 C1214.8 656.0 1212.5 659.5 1210.2 662.7 C1207.9 665.9 1205.5 668.9 1203.0 671.4 C1200.5 673.9 1198.0 676.1 1195.3 678.0 C1192.6 679.9 1189.9 681.5 1187.1 682.7 C1184.3 683.9 1181.4 684.8 1178.5 685.3 C1175.6 685.8 1172.5 686.0 1169.5 685.8 C1166.5 685.6 1163.4 685.1 1160.2 684.3 C1157.0 683.4 1153.8 682.2 1150.6 680.7 C1147.4 679.2 1144.1 677.4 1140.8 675.2 C1137.5 673.0 1134.3 670.5 1131.0 667.6 C1127.7 664.8 1124.3 661.6 1121.0 658.1 C1117.7 654.6 1114.4 650.9 1111.1 646.8 C1107.8 642.7 1104.5 638.4 1101.2 633.7 C1097.9 629.1 1094.7 624.1 1091.5 618.9 C1088.3 613.7 1085.0 608.3 1081.9 602.6 C1078.8 596.9 1075.7 591.0 1072.7 584.9 C1069.7 578.8 1066.8 572.4 1063.9 565.9 C1061.0 559.4 1058.1 552.7 1055.4 545.8 C1052.7 538.9 1050.0 531.8 1047.5 524.6 C1045.0 517.4 1042.5 510.1 1040.2 502.7 C1037.9 495.3 1035.6 487.6 1033.5 480.0 C1031.4 472.4 1029.4 464.6 1027.5 456.9 C1025.6 449.1 1023.9 441.3 1022.3 433.5 C1020.7 425.7 1019.3 417.8 1018.0 409.9 C1016.7 402.0 1015.4 394.1 1014.4 386.3 C1013.4 378.5 1012.5 370.6 1011.8 362.9 C1011.1 355.2 1010.5 347.6 1010.1 340.0 C1009.7 332.4 1009.5 324.9 1009.4 317.5 C1009.3 310.1 1009.4 302.9 1009.6 295.8 C1009.9 288.7 1010.3 281.8 1010.9 275.0 C1011.5 268.2 1012.2 261.7 1013.1 255.3 C1014.0 248.9 1015.1 242.7 1016.3 236.7 C1017.5 230.7 1018.9 225.0 1020.4 219.5 C1021.9 214.0 1023.6 208.7 1025.4 203.7 C1027.2 198.7 1029.2 194.0 1031.3 189.6 C1033.4 185.2 1035.7 181.0 1038.0 177.1 C1040.3 173.2 1042.8 169.7 1045.4 166.4 C1048.0 163.2 1050.8 160.2 1053.6 157.6 C1056.4 155.0 1059.3 152.8 1062.3 150.8 C1065.3 148.9 1068.4 147.2 1071.6 145.9 C1074.8 144.6 1078.1 143.7 1081.4 143.1 C1084.7 142.5 1088.1 142.3 1091.5 142.4 C1094.9 142.5 1098.4 142.9 1101.9 143.7 C1105.4 144.5 1109.0 145.6 1112.5 147.1 C1116.0 148.6 1119.6 150.4 1123.2 152.5 C1126.8 154.6 1130.4 157.1 1133.9 159.9 C1137.5 162.7 1141.0 165.9 1144.5 169.3 C1148.0 172.7 1151.6 176.4 1155.0 180.5 C1158.4 184.6 1161.8 189.0 1165.1 193.6 C1168.4 198.2 1171.8 203.1 1175.0 208.3 C1178.2 213.5 1181.4 218.9 1184.4 224.6 C1187.5 230.3 1190.4 236.2 1193.3 242.4 C1196.2 248.6 1199.0 254.9 1201.7 261.5 C1204.4 268.1 1206.9 274.8 1209.4 281.7 C1211.9 288.6 1214.2 295.8 1216.5 303.0 C1218.8 310.2 1220.9 317.6 1222.9 325.1 C1224.9 332.6 1226.8 340.3 1228.6 348.0 C1230.3 355.7 1231.9 363.5 1233.4 371.3 C1234.9 379.1 1236.3 387.0 1237.5 394.9Z" fill="none" stroke="#9a9a9a" stroke-width="12" filter="url(#bmC)"/><path d="M1237.5 394.9 C1238.7 402.8 1239.8 410.8 1240.8 418.7 C1241.8 426.6 1242.5 434.6 1243.2 442.5 C1243.9 450.4 1244.4 458.3 1244.8 466.1 C1245.2 473.9 1245.4 481.6 1245.5 489.2 C1245.6 496.8 1245.6 504.4 1245.4 511.8 C1245.2 519.2 1244.9 526.5 1244.5 533.6 C1244.1 540.7 1243.5 547.7 1242.8 554.5 C1242.1 561.3 1241.3 567.9 1240.3 574.3 C1239.3 580.7 1238.2 586.9 1237.0 592.9 C1235.8 598.9 1234.5 604.6 1233.0 610.1 C1231.5 615.6 1230.0 620.8 1228.3 625.8 C1226.6 630.8 1224.8 635.4 1222.9 639.8 C1221.0 644.2 1219.0 648.4 1216.9 652.2 C1214.8 656.0 1212.5 659.5 1210.2 662.7 C1207.9 665.9 1205.5 668.9 1203.0 671.4 C1200.5 673.9 1198.0 676.1 1195.3 678.0 C1192.6 679.9 1189.9 681.5 1187.1 682.7 C1184.3 683.9 1181.4 684.8 1178.5 685.3 C1175.6 685.8 1172.5 686.0 1169.5 685.8 C1166.5 685.6 1163.4 685.1 1160.2 684.3 C1157.0 683.4 1153.8 682.2 1150.6 680.7 C1147.4 679.2 1144.1 677.4 1140.8 675.2 C1137.5 673.0 1134.3 670.5 1131.0 667.6 C1127.7 664.8 1124.3 661.6 1121.0 658.1 C1117.7 654.6 1114.4 650.9 1111.1 646.8 C1107.8 642.7 1104.5 638.4 1101.2 633.7 C1097.9 629.1 1094.7 624.1 1091.5 618.9 C1088.3 613.7 1085.0 608.3 1081.9 602.6 C1078.8 596.9 1075.7 591.0 1072.7 584.9 C1069.7 578.8 1066.8 572.4 1063.9 565.9 C1061.0 559.4 1058.1 552.7 1055.4 545.8 C1052.7 538.9 1050.0 531.8 1047.5 524.6 C1045.0 517.4 1042.5 510.1 1040.2 502.7 C1037.9 495.3 1035.6 487.6 1033.5 480.0 C1031.4 472.4 1029.4 464.6 1027.5 456.9 C1025.6 449.1 1023.9 441.3 1022.3 433.5 C1020.7 425.7 1019.3 417.8 1018.0 409.9 C1016.7 402.0 1015.4 394.1 1014.4 386.3 C1013.4 378.5 1012.5 370.6 1011.8 362.9 C1011.1 355.2 1010.5 347.6 1010.1 340.0 C1009.7 332.4 1009.5 324.9 1009.4 317.5 C1009.3 310.1 1009.4 302.9 1009.6 295.8 C1009.9 288.7 1010.3 281.8 1010.9 275.0 C1011.5 268.2 1012.2 261.7 1013.1 255.3 C1014.0 248.9 1015.1 242.7 1016.3 236.7 C1017.5 230.7 1018.9 225.0 1020.4 219.5 C1021.9 214.0 1023.6 208.7 1025.4 203.7 C1027.2 198.7 1029.2 194.0 1031.3 189.6 C1033.4 185.2 1035.7 181.0 1038.0 177.1 C1040.3 173.2 1042.8 169.7 1045.4 166.4 C1048.0 163.2 1050.8 160.2 1053.6 157.6 C1056.4 155.0 1059.3 152.8 1062.3 150.8 C1065.3 148.9 1068.4 147.2 1071.6 145.9 C1074.8 144.6 1078.1 143.7 1081.4 143.1 C1084.7 142.5 1088.1 142.3 1091.5 142.4 C1094.9 142.5 1098.4 142.9 1101.9 143.7 C1105.4 144.5 1109.0 145.6 1112.5 147.1 C1116.0 148.6 1119.6 150.4 1123.2 152.5 C1126.8 154.6 1130.4 157.1 1133.9 159.9 C1137.5 162.7 1141.0 165.9 1144.5 169.3 C1148.0 172.7 1151.6 176.4 1155.0 180.5 C1158.4 184.6 1161.8 189.0 1165.1 193.6 C1168.4 198.2 1171.8 203.1 1175.0 208.3 C1178.2 213.5 1181.4 218.9 1184.4 224.6 C1187.5 230.3 1190.4 236.2 1193.3 242.4 C1196.2 248.6 1199.0 254.9 1201.7 261.5 C1204.4 268.1 1206.9 274.8 1209.4 281.7 C1211.9 288.6 1214.2 295.8 1216.5 303.0 C1218.8 310.2 1220.9 317.6 1222.9 325.1 C1224.9 332.6 1226.8 340.3 1228.6 348.0 C1230.3 355.7 1231.9 363.5 1233.4 371.3 C1234.9 379.1 1236.3 387.0 1237.5 394.9Z" fill="none" stroke="#a8a8a8" stroke-width="6" filter="url(#bsC)"/><path d="M1237.5 394.9 C1238.7 402.8 1239.8 410.8 1240.8 418.7 C1241.8 426.6 1242.5 434.6 1243.2 442.5 C1243.9 450.4 1244.4 458.3 1244.8 466.1 C1245.2 473.9 1245.4 481.6 1245.5 489.2 C1245.6 496.8 1245.6 504.4 1245.4 511.8 C1245.2 519.2 1244.9 526.5 1244.5 533.6 C1244.1 540.7 1243.5 547.7 1242.8 554.5 C1242.1 561.3 1241.3 567.9 1240.3 574.3 C1239.3 580.7 1238.2 586.9 1237.0 592.9 C1235.8 598.9 1234.5 604.6 1233.0 610.1 C1231.5 615.6 1230.0 620.8 1228.3 625.8 C1226.6 630.8 1224.8 635.4 1222.9 639.8 C1221.0 644.2 1219.0 648.4 1216.9 652.2 C1214.8 656.0 1212.5 659.5 1210.2 662.7 C1207.9 665.9 1205.5 668.9 1203.0 671.4 C1200.5 673.9 1198.0 676.1 1195.3 678.0 C1192.6 679.9 1189.9 681.5 1187.1 682.7 C1184.3 683.9 1181.4 684.8 1178.5 685.3 C1175.6 685.8 1172.5 686.0 1169.5 685.8 C1166.5 685.6 1163.4 685.1 1160.2 684.3 C1157.0 683.4 1153.8 682.2 1150.6 680.7 C1147.4 679.2 1144.1 677.4 1140.8 675.2 C1137.5 673.0 1134.3 670.5 1131.0 667.6 C1127.7 664.8 1124.3 661.6 1121.0 658.1 C1117.7 654.6 1114.4 650.9 1111.1 646.8 C1107.8 642.7 1104.5 638.4 1101.2 633.7 C1097.9 629.1 1094.7 624.1 1091.5 618.9 C1088.3 613.7 1085.0 608.3 1081.9 602.6 C1078.8 596.9 1075.7 591.0 1072.7 584.9 C1069.7 578.8 1066.8 572.4 1063.9 565.9 C1061.0 559.4 1058.1 552.7 1055.4 545.8 C1052.7 538.9 1050.0 531.8 1047.5 524.6 C1045.0 517.4 1042.5 510.1 1040.2 502.7 C1037.9 495.3 1035.6 487.6 1033.5 480.0 C1031.4 472.4 1029.4 464.6 1027.5 456.9 C1025.6 449.1 1023.9 441.3 1022.3 433.5 C1020.7 425.7 1019.3 417.8 1018.0 409.9 C1016.7 402.0 1015.4 394.1 1014.4 386.3 C1013.4 378.5 1012.5 370.6 1011.8 362.9 C1011.1 355.2 1010.5 347.6 1010.1 340.0 C1009.7 332.4 1009.5 324.9 1009.4 317.5 C1009.3 310.1 1009.4 302.9 1009.6 295.8 C1009.9 288.7 1010.3 281.8 1010.9 275.0 C1011.5 268.2 1012.2 261.7 1013.1 255.3 C1014.0 248.9 1015.1 242.7 1016.3 236.7 C1017.5 230.7 1018.9 225.0 1020.4 219.5 C1021.9 214.0 1023.6 208.7 1025.4 203.7 C1027.2 198.7 1029.2 194.0 1031.3 189.6 C1033.4 185.2 1035.7 181.0 1038.0 177.1 C1040.3 173.2 1042.8 169.7 1045.4 166.4 C1048.0 163.2 1050.8 160.2 1053.6 157.6 C1056.4 155.0 1059.3 152.8 1062.3 150.8 C1065.3 148.9 1068.4 147.2 1071.6 145.9 C1074.8 144.6 1078.1 143.7 1081.4 143.1 C1084.7 142.5 1088.1 142.3 1091.5 142.4 C1094.9 142.5 1098.4 142.9 1101.9 143.7 C1105.4 144.5 1109.0 145.6 1112.5 147.1 C1116.0 148.6 1119.6 150.4 1123.2 152.5 C1126.8 154.6 1130.4 157.1 1133.9 159.9 C1137.5 162.7 1141.0 165.9 1144.5 169.3 C1148.0 172.7 1151.6 176.4 1155.0 180.5 C1158.4 184.6 1161.8 189.0 1165.1 193.6 C1168.4 198.2 1171.8 203.1 1175.0 208.3 C1178.2 213.5 1181.4 218.9 1184.4 224.6 C1187.5 230.3 1190.4 236.2 1193.3 242.4 C1196.2 248.6 1199.0 254.9 1201.7 261.5 C1204.4 268.1 1206.9 274.8 1209.4 281.7 C1211.9 288.6 1214.2 295.8 1216.5 303.0 C1218.8 310.2 1220.9 317.6 1222.9 325.1 C1224.9 332.6 1226.8 340.3 1228.6 348.0 C1230.3 355.7 1231.9 363.5 1233.4 371.3 C1234.9 379.1 1236.3 387.0 1237.5 394.9Z" fill="none" stroke="#d6d6d6" stroke-width="8" stroke-dasharray="3 2.2" filter="url(#bsC)"/></svg><div class="a" style="left:147.6px;top:0;width:2px;height:615px;background:#f0f000"></div><div class="a" style="left:0;top:294.5px;width:302px;height:2px;background:#f0f000"></div></div>
</div>
<div class="a" id="ij" style="left:1311px;top:36px;width:609px;height:121px;background:#eeeeee;border-radius:10px 0 0 0;overflow:hidden;box-shadow:0 1px 4px rgba(0,0,0,0.3)">
<div class="a" style="left:0;top:0;width:609px;height:36px;background:#f9f9f9;border-bottom:1px solid #dedede"></div>
<div class="t" style="left:230.5px;top:10.5px;font-size:16px;color:#a9a9a9;font-weight:bold;">(Fiji Is Just) ImageJ</div>
<svg style="left:0;top:0" width="609" height="40"><path d="M586.5 14.5 L593.5 21.5 M593.5 14.5 L586.5 21.5" stroke="#555" stroke-width="1.2"/></svg>
<div class="t" style="left:11px;top:45.2px;font-size:12.8px;color:#1e1e1e;font-weight:normal;">File</div>
<div class="t" style="left:51px;top:45.2px;font-size:12.8px;color:#1e1e1e;font-weight:normal;">Edit</div>
<div class="t" style="left:94px;top:45.2px;font-size:12.8px;color:#1e1e1e;font-weight:normal;">Image</div>
<div class="t" style="left:152px;top:45.2px;font-size:12.8px;color:#1e1e1e;font-weight:normal;">Process</div>
<div class="t" style="left:218px;top:45.2px;font-size:12.8px;color:#1e1e1e;font-weight:normal;">Analyze</div>
<div class="t" style="left:283px;top:45.2px;font-size:12.8px;color:#1e1e1e;font-weight:normal;">Plugins</div>
<div class="t" style="left:346px;top:45.2px;font-size:12.8px;color:#1e1e1e;font-weight:normal;">Window</div>
<div class="t" style="left:571px;top:45.2px;font-size:12.8px;color:#1e1e1e;font-weight:normal;">Help</div>
<div class="a" style="left:0;top:63px;width:609px;height:1px;background:#c8c8c8"></div>
<div class="a" style="left:1px;top:64.5px;width:29px;height:30.5px;background:#c4c4c4;border-right:1px solid #9a9a9a;border-bottom:1.5px solid #9a9a9a"></div>
<div class="a" style="left:32px;top:64.5px;width:29px;height:30.5px;background:#e6e6e6;border-right:1px solid #9a9a9a;border-bottom:1.5px solid #9a9a9a"></div>
<div class="a" style="left:62px;top:64.5px;width:29px;height:30.5px;background:#e6e6e6;border-right:1px solid #9a9a9a;border-bottom:1.5px solid #9a9a9a"></div>
<div class="a" style="left:92px;top:64.5px;width:29px;height:30.5px;background:#e6e6e6;border-right:1px solid #9a9a9a;border-bottom:1.5px solid #9a9a9a"></div>
<div class="a" style="left:122px;top:64.5px;width:29px;height:30.5px;background:#e6e6e6;border-right:1px solid #9a9a9a;border-bottom:1.5px solid #9a9a9a"></div>
<div class="a" style="left:152px;top:64.5px;width:29px;height:30.5px;background:#e6e6e6;border-right:1px solid #9a9a9a;border-bottom:1.5px solid #9a9a9a"></div>
<div class="a" style="left:182px;top:64.5px;width:29px;height:30.5px;background:#e6e6e6;border-right:1px solid #9a9a9a;border-bottom:1.5px solid #9a9a9a"></div>
<div class="a" style="left:212px;top:64.5px;width:29px;height:30.5px;background:#e6e6e6;border-right:1px solid #9a9a9a;border-bottom:1.5px solid #9a9a9a"></div>
<div class="a" style="left:242px;top:64.5px;width:29px;height:30.5px;background:#e6e6e6;border-right:1px solid #9a9a9a;border-bottom:1.5px solid #9a9a9a"></div>
<div class="a" style="left:272px;top:64.5px;width:29px;height:30.5px;background:#e6e6e6;border-right:1px solid #9a9a9a;border-bottom:1.5px solid #9a9a9a"></div>
<div class="a" style="left:302px;top:64.5px;width:29px;height:30.5px;background:#e6e6e6;border-right:1px solid #9a9a9a;border-bottom:1.5px solid #9a9a9a"></div>
<div class="a" style="left:332px;top:64.5px;width:29px;height:30.5px;background:#e6e6e6;border-right:1px solid #9a9a9a;border-bottom:1.5px solid #9a9a9a"></div>
<div class="a" style="left:371px;top:64.5px;width:29px;height:30.5px;background:#e6e6e6;border-right:1px solid #9a9a9a;border-bottom:1.5px solid #9a9a9a"></div>
<div class="a" style="left:401px;top:64.5px;width:29px;height:30.5px;background:#e6e6e6;border-right:1px solid #9a9a9a;border-bottom:1.5px solid #9a9a9a"></div>
<div class="a" style="left:431px;top:64.5px;width:29px;height:30.5px;background:#e6e6e6;border-right:1px solid #9a9a9a;border-bottom:1.5px solid #9a9a9a"></div>
<div class="a" style="left:461px;top:64.5px;width:29px;height:30.5px;background:#e6e6e6;border-right:1px solid #9a9a9a;border-bottom:1.5px solid #9a9a9a"></div>
<div class="a" style="left:491px;top:64.5px;width:29px;height:30.5px;background:#e6e6e6;border-right:1px solid #9a9a9a;border-bottom:1.5px solid #9a9a9a"></div>
<div class="a" style="left:521px;top:64.5px;width:29px;height:30.5px;background:#e6e6e6;border-right:1px solid #9a9a9a;border-bottom:1.5px solid #9a9a9a"></div>
<div class="a" style="left:551px;top:64.5px;width:29px;height:30.5px;background:#e6e6e6;border-right:1px solid #9a9a9a;border-bottom:1.5px solid #9a9a9a"></div>
<div class="a" style="left:581px;top:64.5px;width:29px;height:30.5px;background:#e6e6e6;border-right:1px solid #9a9a9a;border-bottom:1.5px solid #9a9a9a"></div>
<svg style="left:0;top:0" width="609" height="121"><rect x="7" y="74" width="17" height="13" fill="#bdbdbd" stroke="#1a2a3a" stroke-width="1.1"/><path d="M21.5 87 L27.5 87 L24.5 90.5 Z" fill="#a00000"/><ellipse cx="46" cy="79" rx="8.5" ry="6.5" stroke="#1a1a1a" stroke-width="1.1" fill="none"/><path d="M52.5 87 L58.5 87 L55.5 90.5 Z" fill="#a00000"/><path d="M68 86 L69 77 L73 73 L84 73 L80 79 L84 86 Z" stroke="#1a1a1a" stroke-width="1.1" fill="none"/><path d="M102 74 Q106 78 110 74 Q116 74 114 81 Q111 87 106 86 Q99 86 98 80 Q98 74 102 74 Z" stroke="#1a1a1a" stroke-width="1.1" fill="none"/><path d="M128 86 L143 71" stroke="#1a1a1a" stroke-width="1.1" fill="none"/><circle cx="128" cy="86" r="1.2" fill="#111"/><circle cx="143" cy="71" r="1.2" fill="#111"/><path d="M142.5 87 L148.5 87 L145.5 90.5 Z" fill="#a00000"/><path d="M175 72 L158 86 L176 86 M166 79 Q169 81 168 86" stroke="#1a1a1a" stroke-width="1.1" fill="none"/><path d="M188 74 H194 M191 71 V77" stroke="#1a2a3a" stroke-width="1.2"/><path d="M194 72 H200 M197 69 V75" stroke="#c8b400" stroke-width="1.2"/><path d="M199 77 H205 M202 74 V80" stroke="#1a2a3a" stroke-width="1.2"/><path d="M187 83 H193 M190 80 V86" stroke="#c8b400" stroke-width="1.2"/><path d="M193 82 H199 M196 79 V85" stroke="#1a2a3a" stroke-width="1.2"/><path d="M202.5 87 L208.5 87 L205.5 90.5 Z" fill="#a00000"/><path d="M220 73 L234 87" stroke="#1a1a1a" stroke-width="1.1" fill="none"/><circle cx="220" cy="73" r="2" fill="#d8d000" stroke="#333" stroke-width="0.6"/><path d="M248 87 L256 71 L264 87 M251 81 H261 M247 87 H250 M262 87 H265" stroke="#1a1a1a" stroke-width="1.1" fill="none"/><circle cx="288" cy="77" r="6" stroke="#1a1a1a" stroke-width="1.1" fill="none"/><path d="M284 81 L278 87" stroke="#1a1a1a" stroke-width="1.1" fill="none"/><path d="M292.5 87 L298.5 87 L295.5 90.5 Z" fill="#a00000"/><path d="M310 88 L307 81 Q307 79 310 81 L312 83 V73 Q313 71 315 73 V80 V71 Q317 70 318 71 V80 V72 Q320 71 321 73 V80 V74 Q323 73 324 75 V83 L323 88" stroke="#1a2a3a" stroke-width="1.1" fill="none"/><rect x="337" y="73" width="17" height="17" fill="#fff"/><path d="M341 82 L353 71" stroke="#111" stroke-width="1.6"/><circle cx="354" cy="70" r="2.2" fill="#111"/><path d="M352.5 87 L358.5 87 L355.5 90.5 Z" fill="#a00000"/><text x="376" y="83" font-family="Liberation Sans" font-size="12" fill="#2a4a8a" letter-spacing="-1">Dev</text><path d="M391.5 87 L397.5 87 L394.5 90.5 Z" fill="#a00000"/><text x="406" y="83" font-family="Liberation Sans" font-size="12" fill="#2a4a8a" letter-spacing="0.5">Stk</text><path d="M421.5 87 L427.5 87 L424.5 90.5 Z" fill="#a00000"/><text x="436" y="83" font-family="Liberation Sans" font-size="12" fill="#2a4a8a" letter-spacing="-1.2">LUT</text><path d="M451.5 87 L457.5 87 L454.5 90.5 Z" fill="#a00000"/><path d="M471 87 L471 82 L477 72 Q479 70 480 72 L479 75 L473 84 Z" stroke="#1a3a7a" stroke-width="1.2" fill="none"/><path d="M471 87 L471 83 L473 84 Z" fill="#1a3a7a"/><path d="M499 87 Q500 82 503 81 L510 71 M499 87 L504 84 L512 73" stroke="#1a3a7a" stroke-width="1.3" fill="none"/><path d="M529 81 L535 75 L541 81 L535 87 Z M535 71 V79 M541 81 V87" stroke="#1a3a7a" stroke-width="1.2" fill="none"/><path d="M588 74 L596 78 L588 82 M594 74 L602 78 L594 82" stroke="#c02020" stroke-width="1.3" fill="none"/></svg>
<div class="t" style="left:3px;top:102.6px;font-size:12.3px;color:#2a2a2a;font-weight:normal;">x=94.35 (402), y=866.81 (897), z=-80.69 (443)</div>
<div class="a" style="left:447px;top:96px;width:142px;height:25px;background:#fdfdfd"></div>
<div class="t" style="left:453px;top:102.6px;font-size:12.3px;color:#b0b0b0;font-weight:normal;">Click here to search</div>
<div class="a" style="left:590px;top:99px;width:22px;height:19px;background:#f2f2f2;border:1.5px solid #8a9ab0"></div>
</div>
<div class="a" style="left:1316px;top:192px;width:149px;height:344px;background:#eeeeee;border-radius:10px 10px 0 0;overflow:hidden;box-shadow:0 1px 5px rgba(0,0,0,0.35)">
<div class="a" style="left:0;top:0;width:149px;height:36px;background:#f9f9f9;border-bottom:1px solid #dcdcdc"></div>
</div>
<div class="t" style="left:1363.5px;top:201.8px;font-size:16px;color:#a9a9a9;font-weight:bold;">B&amp;C</div>
<svg style="left:0;top:0" width="1920" height="1163"><path d="M1443.4 206.4 L1450.6 213.6 M1450.6 206.4 L1443.4 213.6" stroke="#555" stroke-width="1.2"/></svg>
<svg style="left:0;top:0" width="1920" height="1163"><rect x="1326.5" y="239.5" width="128" height="63.5" fill="#fff" stroke="#111" stroke-width="1.2"/><path d="M1327.5 302.5 L1327.5 275 Q1330 282 1333 292 Q1337 300 1345 301 L1357 301 Q1362 300 1366 294 Q1372 289 1380 288 L1384 284 L1387 289 Q1392 297 1398 300 L1410 302 L1327.5 302.5Z" fill="#8a8a8a"/><path d="M1327.5 302.5 L1454 240" stroke="#111" stroke-width="1.1"/></svg>
<div class="t" style="left:1328.4px;top:307.5px;font-size:11.8px;color:#111;font-weight:normal;">190</div>
<div class="t" style="left:1153.5px;width:300px;text-align:right;top:307.5px;font-size:11.8px;color:#111;font-weight:normal;">2380</div>
<svg style="left:0;top:0" width="1920" height="1163"><rect x="1326.3" y="326.4" width="128" height="16" fill="#cbcbcb"/><rect x="1326.3" y="326.4" width="128" height="1" fill="#b0b0b0"/><rect x="1326.3" y="327.4" width="14.5" height="15" fill="#dadada"/><path d="M1340 328.4 L1328 334.4 L1340 340.4" fill="none" stroke="#a8a8a8" stroke-width="0.9"/><rect x="1439.8" y="327.4" width="14.5" height="15" fill="#dadada"/><path d="M1441 328.4 L1453 334.4 L1441 340.4" fill="none" stroke="#a8a8a8" stroke-width="0.9"/><rect x="1341.8" y="327.9" width="6" height="13.5" fill="#e8e8e8" stroke="#a0a0a0" stroke-width="0.7"/><rect x="1326.3" y="362.3" width="128" height="16" fill="#cbcbcb"/><rect x="1326.3" y="362.3" width="128" height="1" fill="#b0b0b0"/><rect x="1326.3" y="363.3" width="14.5" height="15" fill="#dadada"/><path d="M1340 364.3 L1328 370.3 L1340 376.3" fill="none" stroke="#a8a8a8" stroke-width="0.9"/><rect x="1439.8" y="363.3" width="14.5" height="15" fill="#dadada"/><path d="M1441 364.3 L1453 370.3 L1441 376.3" fill="none" stroke="#a8a8a8" stroke-width="0.9"/><rect x="1433.6" y="363.8" width="6" height="13.5" fill="#e8e8e8" stroke="#a0a0a0" stroke-width="0.7"/><rect x="1326.3" y="398.2" width="128" height="16" fill="#cbcbcb"/><rect x="1326.3" y="398.2" width="128" height="1" fill="#b0b0b0"/><rect x="1326.3" y="399.2" width="14.5" height="15" fill="#dadada"/><path d="M1340 400.2 L1328 406.2 L1340 412.2" fill="none" stroke="#a8a8a8" stroke-width="0.9"/><rect x="1439.8" y="399.2" width="14.5" height="15" fill="#dadada"/><path d="M1441 400.2 L1453 406.2 L1441 412.2" fill="none" stroke="#a8a8a8" stroke-width="0.9"/><rect x="1388.6" y="399.7" width="6" height="13.5" fill="#e8e8e8" stroke="#a0a0a0" stroke-width="0.7"/><rect x="1326.3" y="434" width="128" height="16" fill="#cbcbcb"/><rect x="1326.3" y="434" width="128" height="1" fill="#b0b0b0"/><rect x="1326.3" y="435" width="14.5" height="15" fill="#dadada"/><path d="M1340 436 L1328 442 L1340 448" fill="none" stroke="#a8a8a8" stroke-width="0.9"/><rect x="1439.8" y="435" width="14.5" height="15" fill="#dadada"/><path d="M1441 436 L1453 442 L1441 448" fill="none" stroke="#a8a8a8" stroke-width="0.9"/><rect x="1388.6" y="435.5" width="6" height="13.5" fill="#e8e8e8" stroke="#a0a0a0" stroke-width="0.7"/></svg>
<div class="t" style="left:1333.4px;width:120px;text-align:center;top:345.0px;font-size:12.6px;color:#1a1a1a;font-weight:normal">Minimum</div>
<div class="t" style="left:1333.4px;width:120px;text-align:center;top:381.1px;font-size:12.6px;color:#1a1a1a;font-weight:normal">Maximum</div>
<div class="t" style="left:1333.4px;width:120px;text-align:center;top:416.8px;font-size:12.6px;color:#1a1a1a;font-weight:normal">Brightness</div>
<div class="t" style="left:1333.4px;width:120px;text-align:center;top:452.9px;font-size:12.6px;color:#1a1a1a;font-weight:normal">Contrast</div>
<div class="a" style="left:1324px;top:479px;width:64px;height:19.5px;background:#ececec;border:1px solid #a8a8a8;border-top-color:#dadada;border-left-color:#dadada"></div>
<div class="t" style="left:1324.0px;width:64px;text-align:center;top:482.3px;font-size:12.6px;color:#1a1a1a;font-weight:normal">Auto</div>
<div class="a" style="left:1392.7px;top:479px;width:64px;height:19.5px;background:#ececec;border:1px solid #a8a8a8;border-top-color:#dadada;border-left-color:#dadada"></div>
<div class="t" style="left:1392.7px;width:64px;text-align:center;top:482.3px;font-size:12.6px;color:#1a1a1a;font-weight:normal">Reset</div>
<div class="a" style="left:1324px;top:503.8px;width:64px;height:19.5px;background:#ececec;border:1px solid #a8a8a8;border-top-color:#dadada;border-left-color:#dadada"></div>
<div class="t" style="left:1324.0px;width:64px;text-align:center;top:507.1px;font-size:12.6px;color:#1a1a1a;font-weight:normal">Set</div>
<div class="a" style="left:1392.7px;top:503.8px;width:64px;height:19.5px;background:#ececec;border:1px solid #a8a8a8;border-top-color:#dadada;border-left-color:#dadada"></div>
<div class="t" style="left:1392.7px;width:64px;text-align:center;top:507.1px;font-size:12.6px;color:#1a1a1a;font-weight:normal">Apply</div>
</body></html>
